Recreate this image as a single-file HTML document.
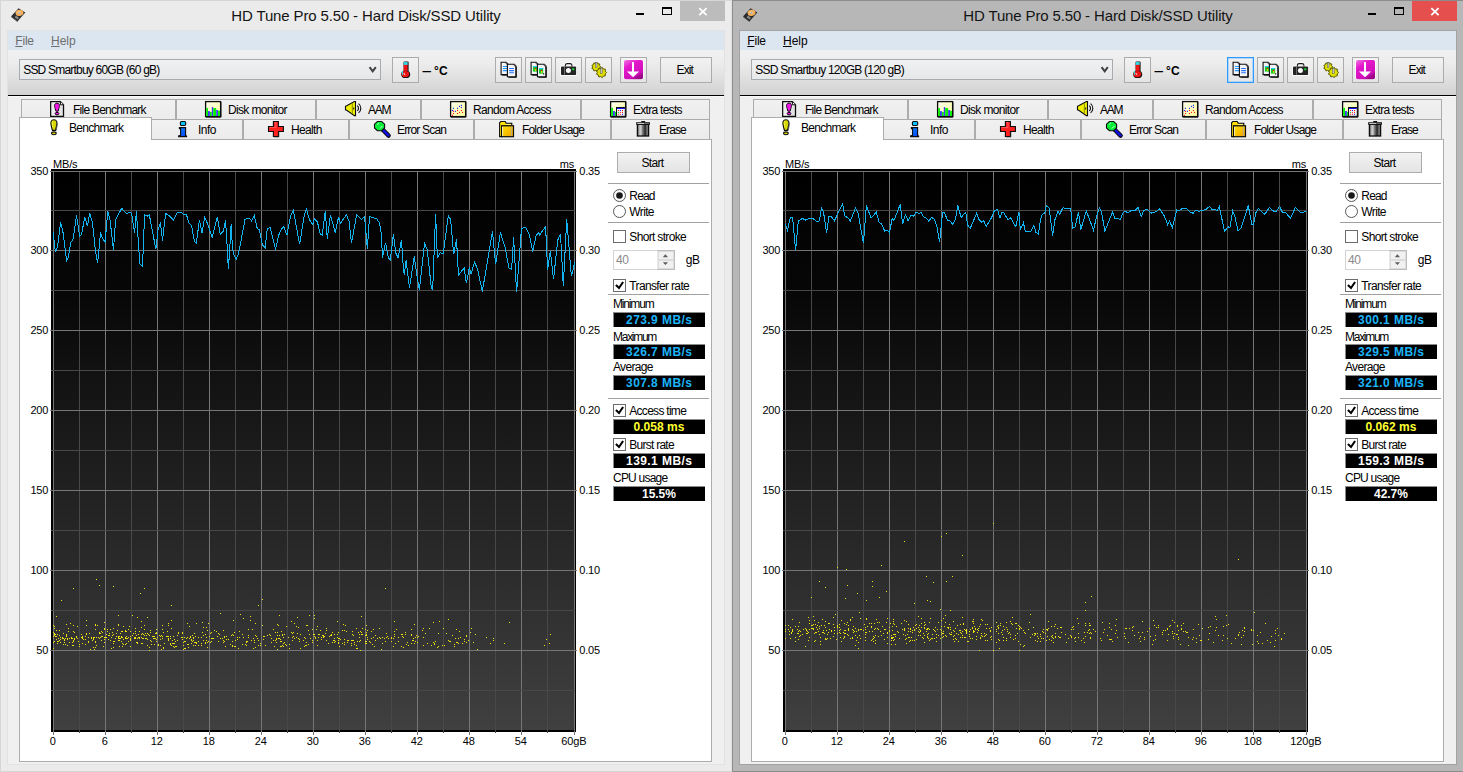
<!DOCTYPE html>
<html><head><meta charset="utf-8"><title>HD Tune Pro 5.50 - Hard Disk/SSD Utility</title>
<style>
html,body{margin:0;padding:0;}
body{width:1463px;height:772px;overflow:hidden;position:relative;background:#ebebeb;font-family:"Liberation Sans", Arial, sans-serif;}
div{box-sizing:content-box;}
u{text-decoration:underline;text-underline-offset:1px;}
</style></head><body>
<div style="position:absolute;left:0px;top:0;width:732px;height:772px;background:#ebebeb;overflow:hidden;">
<div style="position:absolute;left:0px;top:0px;width:732px;height:1px;background:#d6d6d6;"></div>
<div style="position:absolute;left:0px;top:0px;width:1px;height:772px;background:#d6d6d6;"></div>
<div style="position:absolute;left:731px;top:0px;width:1px;height:772px;background:#e2e2e2;"></div>
<svg style="position:absolute;left:11px;top:8px" width="15" height="14" viewBox="0 0 15 14"><path d="M7.6 0.2L14.3 4.5L6.6 13.3L0.2 8.2Z" fill="#2a2a2c"/><path d="M0.2 8.2L6.6 13.3L6.6 14L0.2 9z" fill="#151515"/><ellipse cx="8.5" cy="4.9" rx="4" ry="3.1" transform="rotate(-12 8.5 4.9)" fill="#f3ad58"/><ellipse cx="8.1" cy="4.3" rx="2.2" ry="1.5" fill="#f8c884" opacity=".7"/><ellipse cx="8.4" cy="4.9" rx="1.1" ry=".9" fill="#9fb4cc"/><path d="M4.3 8.4L7.3 10.6" stroke="#8a8a8a" stroke-width="2.2"/></svg>
<div style="position:absolute;top:6px;font-size:15px;line-height:19px;height:19px;color:#141414;white-space:nowrap;letter-spacing:-0.142px;left:266.13px;width:200px;text-align:center;left:66px;width:600px;">HD Tune Pro 5.50 - Hard Disk/SSD Utility</div>
<div style="position:absolute;left:636px;top:13px;width:8px;height:2px;background:#000;"></div>
<div style="position:absolute;left:662px;top:7px;width:8px;height:5px;border:1px solid #000;border-top-width:2px;"></div>
<div style="position:absolute;left:680px;top:1px;width:45px;height:20px;background:#bcbcbc;"></div>
<svg style="position:absolute;left:698px;top:7px" width="10" height="9" viewBox="0 0 10 9"><path d="M1.3 1.1L8.6 8.1M8.6 1.1L1.3 8.1" stroke="#fff" stroke-width="1.8"/></svg>
<div style="position:absolute;left:7px;top:30px;width:718px;height:735px;background:#e2e2e2;"></div>
<div style="position:absolute;left:0px;top:771px;width:732px;height:1px;background:#d6d6d6;"></div>
<div style="position:absolute;left:8px;top:31px;width:716px;height:733px;background:#f0f0f0;"></div>
<div style="position:absolute;left:8px;top:31px;width:716px;height:19px;background:#dce6f1;"></div>
<div style="position:absolute;top:33px;font-size:12px;line-height:16px;height:16px;color:#6d6d6d;white-space:nowrap;letter-spacing:-0.209px;left:15.3px;"><u>F</u>ile</div>
<div style="position:absolute;top:33px;font-size:12px;line-height:16px;height:16px;color:#6d6d6d;white-space:nowrap;letter-spacing:0.005px;left:51px;"><u>H</u>elp</div>
<div style="position:absolute;left:8px;top:50px;width:716px;height:45px;background:linear-gradient(#f1f1f1,#ececec 30%,#d2d2d2);"></div>
<div style="position:absolute;left:8px;top:95px;width:716px;height:1px;background:#000;"></div>
<div style="position:absolute;left:8px;top:96px;width:716px;height:1px;background:#fafafa;"></div>
<div style="position:absolute;left:19px;top:59px;width:360px;height:19px;border:1px solid #a7abb0;background:linear-gradient(#f0f1f3,#e5e7e9);"></div>
<div style="position:absolute;top:62px;font-size:12px;line-height:16px;height:16px;color:#000;white-space:nowrap;letter-spacing:-0.791px;left:23.2px;">SSD Smartbuy 60GB (60 gB)</div>
<svg style="position:absolute;left:368px;top:66px" width="10" height="8" viewBox="0 0 10 8"><path d="M1.6 1.2L4.7 5.4L7.8 1.2" stroke="#404040" stroke-width="2" fill="none"/></svg>
<div style="position:absolute;left:392px;top:57px;width:25px;height:24px;border:1px solid #acacac;background:linear-gradient(#f2f2f2,#e4e4e4);"></div>
<svg style="position:absolute;left:397px;top:61px;overflow:visible" width="18" height="18" viewBox="0 0 18 18"><rect x="6.6" y="0.4" width="5" height="12" rx="1" fill="#101010"/><rect x="6.7" y="0.9" width="3.9" height="11.5" fill="#f01414"/><rect x="6.7" y="0.9" width="3.9" height="3" fill="#28d8e0"/><ellipse cx="8.7" cy="13.4" rx="4.5" ry="3.6" fill="#101010"/><ellipse cx="8.3" cy="13.1" rx="3.9" ry="3.1" fill="#f01414"/><path d="M4.5 11.6L5.6 10.2V14" stroke="#28d8e0" stroke-width="1" fill="none"/><path d="M7 12.2C7 13 7.4 13.6 8.2 13.8" stroke="#fff" stroke-width="1" fill="none"/></svg>
<div style="position:absolute;top:63px;font-size:12px;line-height:16px;height:16px;color:#000;white-space:nowrap;font-weight:bold;left:421.6px;"><span style="display:inline-block;transform:scaleX(1.42);transform-origin:0 50%;">–</span><span style="display:inline-block;width:5.8px"> </span><span style="letter-spacing:0.1px">°C</span></div>
<div style="position:absolute;left:495px;top:57px;width:25px;height:24px;border:1px solid #acacac;background:linear-gradient(#f2f2f2,#e4e4e4);"></div>
<svg style="position:absolute;left:500px;top:61px;overflow:visible" width="18" height="18" viewBox="0 0 18 18"><path d="M1.1 1.2H6.1L7.699999999999999 2.8V13.6H1.1Z" fill="#f4f4f6" stroke="#101010" stroke-width="1.1"/><path d="M6.1 1.2V2.8H7.699999999999999" fill="#fff" stroke="#101010" stroke-width=".7"/><path d="M8.299999999999999 3.4000000000000004V14.2H2.1" stroke="#101010" stroke-width=".9" fill="none"/><path d="M2.9 5.5H7.6M2.9 7.5H7.6M2.9 9.6H7.6" stroke="#1e96ff" stroke-width="1.1"/><path d="M7.4 3.2H14.200000000000001L15.8 4.800000000000001V15.8H7.4Z" fill="#f4f4f6" stroke="#101010" stroke-width="1.1"/><path d="M14.200000000000001 3.2V4.800000000000001H15.8" fill="#fff" stroke="#101010" stroke-width=".7"/><path d="M16.400000000000002 5.4V16.400000000000002H8.4" stroke="#101010" stroke-width=".9" fill="none"/><path d="M9.2 7.5H13.9M9.2 9.6H13.9M9.2 11.7H13.9" stroke="#2070ff" stroke-width="1.1"/></svg>
<div style="position:absolute;left:525px;top:57px;width:25px;height:24px;border:1px solid #acacac;background:linear-gradient(#f2f2f2,#e4e4e4);"></div>
<svg style="position:absolute;left:530px;top:61px;overflow:visible" width="18" height="18" viewBox="0 0 18 18"><path d="M1.1 1.2H6.1L7.699999999999999 2.8V13.6H1.1Z" fill="#f4f4f6" stroke="#101010" stroke-width="1.1"/><path d="M6.1 1.2V2.8H7.699999999999999" fill="#fff" stroke="#101010" stroke-width=".7"/><path d="M8.299999999999999 3.4000000000000004V14.2H2.1" stroke="#101010" stroke-width=".9" fill="none"/><rect x="2.9" y="5" width="4.2" height="5.6" fill="#10d020"/><rect x="2.9" y="5" width="4.2" height="1.2" fill="#20c8f0"/><rect x="4.9" y="7.8" width="1.4" height="2" fill="#e8e000"/><rect x="4.7" y="6.8" width="1.3" height="1.3" fill="#f01010"/><path d="M7.4 3.2H14.200000000000001L15.8 4.800000000000001V15.8H7.4Z" fill="#f4f4f6" stroke="#101010" stroke-width="1.1"/><path d="M14.200000000000001 3.2V4.800000000000001H15.8" fill="#fff" stroke="#101010" stroke-width=".7"/><path d="M16.400000000000002 5.4V16.400000000000002H8.4" stroke="#101010" stroke-width=".9" fill="none"/><rect x="9" y="7" width="4.2" height="5.6" fill="#10d020"/><rect x="9" y="7" width="4.2" height="1.2" fill="#20c8f0"/><rect x="11" y="9.8" width="1.4" height="2" fill="#e8e000"/><rect x="10.8" y="8.8" width="1.3" height="1.3" fill="#f01010"/><rect x="13" y="12.3" width="1.2" height="1.2" fill="#101010"/></svg>
<div style="position:absolute;left:555px;top:57px;width:25px;height:24px;border:1px solid #acacac;background:linear-gradient(#f2f2f2,#e4e4e4);"></div>
<svg style="position:absolute;left:560px;top:61px;overflow:visible" width="18" height="18" viewBox="0 0 18 18"><path d="M0.3 5.8C0.3 4.8 1 4.6 2 4.6H4.2L5.2 1.3H12.2L13.2 4.6H15C16.2 4.6 16.8 5 16.8 6V14.8H0.3Z" fill="#fff"/><path d="M5.4 5.6V4C5.4 2.9 6.2 2.6 7.2 2.6H10C11 2.6 11.9 2.9 11.9 4V5.6" fill="#f4f4f4" stroke="#161616" stroke-width="1.1"/><rect x="1" y="5.5" width="15.1" height="8.5" rx=".8" fill="#242424"/><path d="M4.5 5.8V13.8" stroke="#7a7a7a" stroke-width=".8"/><circle cx="8.4" cy="9.5" r="2.5" fill="#fafafa"/><rect x="12.2" y="7.3" width="2.1" height="1.9" fill="#10e030"/></svg>
<div style="position:absolute;left:585px;top:57px;width:25px;height:24px;border:1px solid #acacac;background:linear-gradient(#f2f2f2,#e4e4e4);"></div>
<svg style="position:absolute;left:590px;top:61px;overflow:visible" width="18" height="18" viewBox="0 0 18 18"><polygon points="10.80,5.90 9.57,7.13 9.72,8.86 7.99,9.01 7.00,10.43 5.58,9.43 3.90,9.88 3.45,8.21 1.88,7.47 2.61,5.90 1.88,4.33 3.45,3.59 3.90,1.92 5.58,2.37 7.00,1.37 7.99,2.79 9.72,2.94 9.57,4.67" fill="#e0e000" stroke="#5a5a00" stroke-width="1" stroke-linejoin="round"/><rect x="5.5" y="1.4" width="1.5" height="5.2" fill="#c8c8d4" stroke="#55555f" stroke-width=".5"/><polygon points="16.60,11.50 15.21,12.89 15.38,14.84 13.43,15.01 12.30,16.62 10.70,15.49 8.80,16.00 8.29,14.11 6.51,13.28 7.34,11.50 6.51,9.72 8.29,8.89 8.80,7.00 10.70,7.51 12.30,6.38 13.43,7.99 15.38,8.16 15.21,10.11" fill="#e0e000" stroke="#5a5a00" stroke-width="1" stroke-linejoin="round"/><rect x="10.7" y="7.2" width="1.5" height="5.2" fill="#c8c8d4" stroke="#55555f" stroke-width=".5"/></svg>
<div style="position:absolute;left:620px;top:57px;width:25px;height:24px;border:1px solid #acacac;background:linear-gradient(#f2f2f2,#e4e4e4);"></div>
<svg style="position:absolute;left:624px;top:60px;overflow:visible" width="19" height="19" viewBox="0 0 19 19"><defs><linearGradient id="mg" x1="0" y1="0" x2="0.6" y2="1"><stop offset="0" stop-color="#f478e4"/><stop offset=".35" stop-color="#e418cc"/><stop offset=".85" stop-color="#d010b8"/><stop offset="1" stop-color="#9c0888"/></linearGradient></defs><rect x="-0.7" y="-0.7" width="20.4" height="20.4" rx="2.4" fill="#fff" opacity=".85"/><rect x="0" y="0" width="19" height="19.2" rx="1.8" fill="url(#mg)"/><rect x="8" y="2.1" width="2" height="10" fill="#fff"/><path d="M2.9 11.4H15.1L9 17.2Z" fill="#fff"/></svg>
<div style="position:absolute;left:660px;top:57px;width:50px;height:24px;border:1px solid #acacac;background:linear-gradient(#f2f2f2,#e4e4e4);"></div>
<div style="position:absolute;top:62px;font-size:12px;line-height:16px;height:16px;color:#000;white-space:nowrap;letter-spacing:-0.926px;left:584.74px;width:200px;text-align:center;">Exit</div>
<div style="position:absolute;left:21px;top:99px;width:153px;height:20px;border:1px solid #acacac;background:linear-gradient(#f1f1f1,#ebebeb);border-bottom:none;"></div>
<div style="position:absolute;left:176px;top:99px;width:138px;height:20px;border:1px solid #acacac;background:linear-gradient(#f1f1f1,#ebebeb);border-bottom:none;"></div>
<div style="position:absolute;left:316px;top:99px;width:103px;height:20px;border:1px solid #acacac;background:linear-gradient(#f1f1f1,#ebebeb);border-bottom:none;"></div>
<div style="position:absolute;left:421px;top:99px;width:158px;height:20px;border:1px solid #acacac;background:linear-gradient(#f1f1f1,#ebebeb);border-bottom:none;"></div>
<div style="position:absolute;left:581px;top:99px;width:127px;height:20px;border:1px solid #acacac;background:linear-gradient(#f1f1f1,#ebebeb);border-bottom:none;"></div>
<div style="position:absolute;left:152px;top:119px;width:90px;height:20px;border:1px solid #acacac;background:linear-gradient(#f1f1f1,#ebebeb);border-bottom:none;border-left:none;"></div>
<div style="position:absolute;left:243px;top:119px;width:104px;height:20px;border:1px solid #acacac;background:linear-gradient(#f1f1f1,#ebebeb);border-bottom:none;"></div>
<div style="position:absolute;left:349px;top:119px;width:123px;height:20px;border:1px solid #acacac;background:linear-gradient(#f1f1f1,#ebebeb);border-bottom:none;"></div>
<div style="position:absolute;left:474px;top:119px;width:135px;height:20px;border:1px solid #acacac;background:linear-gradient(#f1f1f1,#ebebeb);border-bottom:none;"></div>
<div style="position:absolute;left:611px;top:119px;width:97px;height:20px;border:1px solid #acacac;background:linear-gradient(#f1f1f1,#ebebeb);border-bottom:none;"></div>
<div style="position:absolute;left:19px;top:139px;width:691px;height:621px;background:#fff;border:1px solid #acacac;"></div>
<div style="position:absolute;left:19px;top:117px;width:131px;height:22px;background:#fff;border:1px solid #acacac;border-bottom:none;"></div>
<svg style="position:absolute;left:50px;top:101px;overflow:visible" width="15" height="17" viewBox="0 0 15 17"><path d="M0.7 0.7H10.4L13.5 3.8V15.4H0.7Z" fill="#e4e4e6" stroke="#0c0c0c" stroke-width="1.3"/><path d="M1.6 1.6H6V14.5H1.6Z" fill="#f4f4f4" opacity=".7"/><path d="M10.4 0.7V3.8H13.5" fill="#fff" stroke="#0c0c0c" stroke-width="1"/><path d="M7 2.2C9.7 2.2 10 4.8 8.8 7.6L8.1 10.2H5.9L5.2 7.6C4 4.8 4.3 2.2 7 2.2Z" fill="#f018e4" stroke="#1a001a" stroke-width="1"/><ellipse cx="7" cy="12.6" rx="1.9" ry="1.2" fill="#f018e4" stroke="#1a001a" stroke-width="1"/></svg>
<div style="position:absolute;top:102px;font-size:12px;line-height:16px;height:16px;color:#000;white-space:nowrap;letter-spacing:-0.755px;left:73px;">File Benchmark</div>
<svg style="position:absolute;left:205px;top:101px;overflow:visible" width="17" height="17" viewBox="0 0 17 17"><defs><linearGradient id="cr" x1="0" y1="0" x2="1" y2="1"><stop offset="0" stop-color="#fffff0"/><stop offset="1" stop-color="#ffff98"/></linearGradient></defs><rect x="0.6" y="0.6" width="15" height="15" fill="url(#cr)" stroke="#0c0c0c" stroke-width="1.3"/><path d="M15.9 1V16.1H1" stroke="#0c0c0c" stroke-width="1" fill="none"/><rect x="1.2" y="7.1" width="1.8" height="7.9" fill="#00f000"/><rect x="3" y="10.1" width="1.9" height="4.9" fill="#4038ff"/><rect x="4.9" y="10.9" width="1.9" height="4.1" fill="#00f000"/><rect x="6.8" y="6" width="1.4" height="9.0" fill="#4038ff"/><rect x="8.2" y="7.1" width="3.0" height="7.9" fill="#00f000"/><rect x="11.2" y="9" width="1.9" height="6.0" fill="#4038ff"/><rect x="13.1" y="9.8" width="1.9" height="5.2" fill="#00f000"/></svg>
<div style="position:absolute;top:102px;font-size:12px;line-height:16px;height:16px;color:#000;white-space:nowrap;letter-spacing:-0.657px;left:228px;">Disk monitor</div>
<svg style="position:absolute;left:345px;top:101px;overflow:visible" width="17" height="16" viewBox="0 0 17 16"><path d="M0.5 5.3L1.7 4.8L9.4 0.5H10.5V14.6H9.4L1.7 9.3L0.5 8.8Z" fill="#f0f000" stroke="#0c0c0c" stroke-width="1.1"/><path d="M7.3 2.2V12.8" stroke="#8a8a00" stroke-width="1"/><path d="M8.6 6.4v2.2" stroke="#333" stroke-width="1.2"/><path d="M12.3 4.6C13.9 5.9 13.9 8.6 12.3 9.9" stroke="#0c0c0c" stroke-width="1.1" fill="none"/><path d="M13.6 2.6C16.6 5 16.6 9.4 13.6 11.8" stroke="#0c0c0c" stroke-width="1.1" fill="none"/></svg>
<div style="position:absolute;top:102px;font-size:12px;line-height:16px;height:16px;color:#000;white-space:nowrap;letter-spacing:-1.235px;left:368px;">AAM</div>
<svg style="position:absolute;left:450px;top:101px;overflow:visible" width="17" height="17" viewBox="0 0 17 17"><rect x="0.6" y="0.6" width="15" height="15" fill="url(#cr2)" stroke="#0c0c0c" stroke-width="1.3"/><defs><linearGradient id="cr2" x1="0" y1="0" x2="1" y2="1"><stop offset="0" stop-color="#fffff0"/><stop offset="1" stop-color="#ffff98"/></linearGradient></defs><path d="M15.9 1V16.1H1" stroke="#0c0c0c" stroke-width="1" fill="none"/><rect x="2.95" y="6.75" width="1.1" height="1.1" fill="#1010ff"/><rect x="1.85" y="8.95" width="1.1" height="1.1" fill="#1010ff"/><rect x="4.85" y="9.75" width="1.1" height="1.1" fill="#1010ff"/><rect x="6.95" y="6.75" width="1.1" height="1.1" fill="#1010ff"/><rect x="8.95" y="4.85" width="1.1" height="1.1" fill="#1010ff"/><rect x="10.85" y="3.85" width="1.1" height="1.1" fill="#1010ff"/><rect x="10.85" y="5.95" width="1.1" height="1.1" fill="#1010ff"/><rect x="2.95" y="9.75" width="1.1" height="1.1" fill="#ff1010"/><rect x="2.95" y="11.95" width="1.1" height="1.1" fill="#ff1010"/><rect x="1.85" y="13.85" width="1.1" height="1.1" fill="#ff1010"/><rect x="6.95" y="8.95" width="1.1" height="1.1" fill="#ff1010"/><rect x="6.95" y="11.95" width="1.1" height="1.1" fill="#ff1010"/><rect x="8.95" y="10.85" width="1.1" height="1.1" fill="#ff1010"/><rect x="10.85" y="8.95" width="1.1" height="1.1" fill="#ff1010"/><rect x="11.95" y="10.85" width="1.1" height="1.1" fill="#ff1010"/></svg>
<div style="position:absolute;top:102px;font-size:12px;line-height:16px;height:16px;color:#000;white-space:nowrap;letter-spacing:-0.685px;left:473px;">Random Access</div>
<svg style="position:absolute;left:610px;top:101px;overflow:visible" width="17" height="17" viewBox="0 0 17 17"><defs><linearGradient id="cr3" x1="0" y1="0" x2="1" y2="1"><stop offset="0" stop-color="#fffff0"/><stop offset="1" stop-color="#ffff98"/></linearGradient></defs><rect x="0.6" y="0.6" width="15" height="15" fill="url(#cr3)" stroke="#0c0c0c" stroke-width="1.3"/><path d="M15.9 1V16.1H1" stroke="#0c0c0c" stroke-width="1" fill="none"/><rect x="1.2" y="6.8" width="1.8" height="8.2" fill="#00f000"/><rect x="3" y="10" width="1.9" height="5" fill="#4038ff"/><rect x="4.9" y="10.9" width="1.4" height="4.1" fill="#00f000"/><rect x="6.5" y="6.5" width="8.8" height="8.8" fill="#f4f4f4" stroke="#0c0c0c" stroke-width="1"/><rect x="7" y="6.9" width="7.8" height="1.1" fill="#1010ff"/><rect x="7.90" y="9.00" width="1" height="1" fill="#ff1010"/><rect x="9.90" y="9.00" width="1" height="1" fill="#1010ff"/><rect x="12.00" y="9.00" width="1" height="1" fill="#ff1010"/><rect x="7.90" y="10.90" width="1" height="1" fill="#00c000"/><rect x="9.90" y="10.90" width="1" height="1" fill="#ff1010"/><rect x="12.00" y="10.90" width="1" height="1" fill="#ff1010"/><rect x="7.90" y="12.80" width="1" height="1" fill="#ff1010"/><rect x="9.90" y="12.80" width="1" height="1" fill="#ff1010"/><rect x="12.00" y="12.80" width="1" height="1" fill="#1010ff"/></svg>
<div style="position:absolute;top:102px;font-size:12px;line-height:16px;height:16px;color:#000;white-space:nowrap;letter-spacing:-0.717px;left:633px;">Extra tests</div>
<svg style="position:absolute;left:178px;top:121px;overflow:visible" width="10" height="17" viewBox="0 0 10 17"><defs><linearGradient id="ib" x1="0" y1="0" x2="1" y2="1"><stop offset="0" stop-color="#0a90ff"/><stop offset="1" stop-color="#0838f0"/></linearGradient></defs><rect x="2.4" y="0.5" width="5.3" height="4" rx="1.2" fill="#08c4fa" stroke="#0c0c0c" stroke-width="1.1"/><path d="M1.4 6.6H7.6V14.5L8.6 15V15.6H0.6V15L2.6 14.4V7.8H1.4Z" fill="url(#ib)" stroke="#0c0c0c" stroke-width="1.1"/></svg>
<div style="position:absolute;top:122px;font-size:12px;line-height:16px;height:16px;color:#000;white-space:nowrap;letter-spacing:-0.554px;left:198px;">Info</div>
<svg style="position:absolute;left:268px;top:121px;overflow:visible" width="17" height="17" viewBox="0 0 17 17"><path d="M5.4 0.5H10.4V5.5H15.4V10.5H10.4V15.5H5.4V10.5H0.5V5.5H5.4Z" fill="#ff2020" stroke="#0c0c0c" stroke-width="1.1"/><path d="M6.3 1.5H8V6.4H1.5" stroke="#ff7070" stroke-width=".9" fill="none" opacity=".8"/><path d="M11 10.9V16.1H6" stroke="#333" stroke-width=".8" fill="none" opacity=".6"/></svg>
<div style="position:absolute;top:122px;font-size:12px;line-height:16px;height:16px;color:#000;white-space:nowrap;letter-spacing:-0.648px;left:291px;">Health</div>
<svg style="position:absolute;left:374px;top:121px;overflow:visible" width="17" height="17" viewBox="0 0 17 17"><path d="M8.3 8.2L14.6 14.6" stroke="#0c0c0c" stroke-width="4.4" stroke-linecap="round"/><path d="M8.3 8.2L14.4 14.4" stroke="#1010e0" stroke-width="2.6" stroke-linecap="round"/><path d="M3.4 0.5H7.7L10.6 3.2V6.9L7.7 9.7H3.4L0.5 6.9V3.2Z" fill="#08ee38" stroke="#0c0c0c" stroke-width="1.1"/><path d="M3.2 3.6L4.8 2M6 7.4L8.3 5" stroke="#d8ffe0" stroke-width=".9"/></svg>
<div style="position:absolute;top:122px;font-size:12px;line-height:16px;height:16px;color:#000;white-space:nowrap;letter-spacing:-0.825px;left:397px;">Error Scan</div>
<svg style="position:absolute;left:499px;top:121px;overflow:visible" width="16" height="17" viewBox="0 0 16 17"><defs><linearGradient id="fg" x1="0" y1="0" x2="1" y2="1"><stop offset="0" stop-color="#ffe400"/><stop offset="1" stop-color="#f0a000"/></linearGradient></defs><path d="M0.6 15.6V1.8L1.8 0.5H6.2L7.3 2.4H12.8V5H2.6V15.6Z" fill="#ffe000" stroke="#0c0c0c" stroke-width="1.1"/><path d="M7 3.3h5" stroke="#fff8b0" stroke-width=".9"/><rect x="2.6" y="4.8" width="11.9" height="10.9" fill="url(#fg)" stroke="#0c0c0c" stroke-width="1.2"/><path d="M3.6 5.8V14.8" stroke="#fffad0" stroke-width=".9"/><path d="M12.4 5.5V15" stroke="#a8a8a8" stroke-width=".8"/></svg>
<div style="position:absolute;top:122px;font-size:12px;line-height:16px;height:16px;color:#000;white-space:nowrap;letter-spacing:-0.82px;left:522px;">Folder Usage</div>
<svg style="position:absolute;left:636px;top:121px;overflow:visible" width="15" height="17" viewBox="0 0 15 17"><defs><linearGradient id="tg" x1="0" y1="0" x2="1" y2="0"><stop offset="0" stop-color="#444"/><stop offset=".27" stop-color="#f8f8f8"/><stop offset=".42" stop-color="#8a8a8a"/><stop offset=".7" stop-color="#2a2a2a"/><stop offset=".88" stop-color="#888"/><stop offset="1" stop-color="#333"/></linearGradient></defs><rect x="1.4" y="3.2" width="11.2" height="11.8" fill="url(#tg)" stroke="#0c0c0c" stroke-width="1.3"/><path d="M4.3 4V14.5M9 4V14.5" stroke="#222" stroke-width=".5" opacity=".5"/><rect x="0.2" y="1.2" width="13.7" height="2.5" fill="#0c0c0c"/><rect x="5.3" y="0" width="3.8" height="1.6" fill="#0c0c0c"/><path d="M1.2 2.4H8" stroke="#ddd" stroke-width="1"/><path d="M8 2.4H13" stroke="#777" stroke-width="1"/></svg>
<div style="position:absolute;top:122px;font-size:12px;line-height:16px;height:16px;color:#000;white-space:nowrap;letter-spacing:-0.91px;left:659px;">Erase</div>
<svg style="position:absolute;left:50px;top:119px;overflow:visible" width="10" height="17" viewBox="0 0 10 17"><path d="M3.9 0.8C6.8 0.8 7.4 3 6.6 6.5L5.5 11.4H2.4L1.2 6.5C0.4 3 1 0.8 3.9 0.8Z" fill="#d6d600" stroke="#0c0c0c" stroke-width="1.1"/><path d="M2.6 2.2C2 3.5 2.2 5.5 3 8.5" stroke="#f4f450" stroke-width="1" fill="none"/><path d="M6.9 3.5C7.6 5 6.9 8 6.2 11.6" stroke="#555" stroke-width=".9" fill="none"/><ellipse cx="3.9" cy="14.3" rx="2.3" ry="1.4" fill="#d6d600" stroke="#0c0c0c" stroke-width="1.1"/></svg>
<div style="position:absolute;top:120px;font-size:12px;line-height:16px;height:16px;color:#000;white-space:nowrap;letter-spacing:-0.71px;left:69px;">Benchmark</div>
<svg style="position:absolute;left:0;top:0" width="732" height="772" viewBox="0 0 732 772">
<defs><linearGradient id="cg" x1="0" y1="0" x2="0" y2="1"><stop offset="0" stop-color="#000"/><stop offset="0.2" stop-color="#060606"/><stop offset="1" stop-color="#404040"/></linearGradient></defs>
<rect x="51" y="169" width="525" height="563" fill="#000"/>
<rect x="53" y="171" width="522" height="559" fill="url(#cg)"/>
<rect x="53" y="171" width="1" height="564" fill="#767676"/><rect x="79" y="171" width="1" height="562" fill="#484848"/><rect x="105" y="171" width="1" height="564" fill="#767676"/><rect x="131" y="171" width="1" height="562" fill="#484848"/><rect x="157" y="171" width="1" height="564" fill="#767676"/><rect x="183" y="171" width="1" height="562" fill="#484848"/><rect x="209" y="171" width="1" height="564" fill="#767676"/><rect x="235" y="171" width="1" height="562" fill="#484848"/><rect x="261" y="171" width="1" height="564" fill="#767676"/><rect x="287" y="171" width="1" height="562" fill="#484848"/><rect x="313" y="171" width="1" height="564" fill="#767676"/><rect x="339" y="171" width="1" height="562" fill="#484848"/><rect x="365" y="171" width="1" height="564" fill="#767676"/><rect x="391" y="171" width="1" height="562" fill="#484848"/><rect x="417" y="171" width="1" height="564" fill="#767676"/><rect x="443" y="171" width="1" height="562" fill="#484848"/><rect x="469" y="171" width="1" height="564" fill="#767676"/><rect x="495" y="171" width="1" height="562" fill="#484848"/><rect x="521" y="171" width="1" height="564" fill="#767676"/><rect x="547" y="171" width="1" height="562" fill="#484848"/><rect x="574" y="171" width="1" height="564" fill="#767676"/><rect x="50" y="171" width="527" height="1" fill="#767676"/><rect x="51" y="210" width="524" height="1" fill="#484848"/><rect x="50" y="250" width="527" height="1" fill="#767676"/><rect x="51" y="290" width="524" height="1" fill="#484848"/><rect x="50" y="330" width="527" height="1" fill="#767676"/><rect x="51" y="370" width="524" height="1" fill="#484848"/><rect x="50" y="410" width="527" height="1" fill="#767676"/><rect x="51" y="450" width="524" height="1" fill="#484848"/><rect x="50" y="490" width="527" height="1" fill="#767676"/><rect x="51" y="530" width="524" height="1" fill="#484848"/><rect x="50" y="570" width="527" height="1" fill="#767676"/><rect x="51" y="610" width="524" height="1" fill="#484848"/><rect x="50" y="650" width="527" height="1" fill="#767676"/><rect x="51" y="690" width="524" height="1" fill="#484848"/>
<path d="M160 636h1M237 639h1M72 645h1M76 636h1M194 642h1M276 642h1M254 642h1M377 638h1M100 633h1M113 647h1M280 639h1M72 638h1M298 638h1M203 627h1M347 640h1M232 646h1M319 634h1M191 640h1M103 646h1M334 642h1M388 638h1M255 635h1M366 634h1M73 641h1M284 642h1M181 637h1M60 642h1M72 642h1M95 624h1M79 646h1M242 644h1M145 633h1M172 643h1M111 637h1M130 638h1M54 635h1M175 646h1M228 639h1M296 626h1M387 636h1M183 645h1M73 631h1M122 637h1M53 636h1M86 620h1M270 635h1M136 635h1M370 642h1M207 642h1M166 636h1M361 616h1M233 635h1M240 614h1M380 638h1M139 631h1M235 646h1M162 629h1M373 629h1M357 641h1M171 628h1M62 638h1M454 646h1M434 644h1M126 636h1M118 625h1M366 634h1M286 645h1M411 643h1M328 643h1M163 647h1M470 632h1M317 626h1M95 625h1M101 636h1M486 637h1M96 579h1M285 644h1M431 645h1M123 626h1M150 632h1M192 635h1M411 635h1M407 642h1M416 635h1M59 640h1M113 586h1M110 640h1M161 635h1M245 644h1M135 631h1M337 634h1M413 638h1M269 634h1M203 640h1M212 638h1M439 621h1M247 641h1M93 639h1M77 626h1M342 643h1M104 639h1M393 638h1M125 637h1M504 643h1M106 637h1M118 638h1M316 629h1M59 635h1M274 646h1M471 628h1M141 637h1M96 637h1M412 640h1M417 642h1M307 625h1M194 633h1M435 641h1M375 635h1M379 637h1M423 628h1M95 641h1M106 634h1M120 633h1M149 647h1M112 632h1M58 641h1M243 618h1M88 642h1M196 642h1M224 637h1M490 643h1M279 635h1M168 636h1M324 636h1M107 629h1M294 623h1M133 633h1M201 637h1M460 637h1M464 639h1M171 605h1M210 642h1M54 628h1M82 637h1M154 638h1M258 640h1M313 634h1M182 633h1M317 640h1M67 645h1M321 637h1M99 633h1M351 640h1M257 638h1M129 626h1M97 625h1M246 645h1M275 640h1M348 640h1M223 640h1M322 635h1M77 638h1M323 637h1M219 634h1M335 641h1M282 634h1M325 633h1M250 620h1M142 638h1M149 635h1M207 647h1M119 646h1M433 622h1M466 642h1M142 633h1M256 636h1M232 645h1M225 646h1M308 630h1M61 600h1M202 632h1M99 632h1M53 648h1M366 625h1M405 632h1M176 646h1M172 640h1M144 625h1M147 645h1M135 633h1M177 640h1M394 634h1M438 633h1M315 637h1M329 636h1M148 634h1M209 636h1M151 644h1M288 637h1M246 642h1M122 643h1M220 613h1M202 622h1M116 636h1M132 635h1M251 640h1M190 636h1M178 632h1M466 635h1M223 642h1M143 634h1M185 648h1M386 633h1M63 644h1M258 605h1M423 637h1M375 640h1M104 642h1M299 639h1M334 634h1M243 637h1M417 637h1M153 638h1M306 625h1M76 637h1M127 638h1M56 616h1M283 643h1M211 638h1M309 615h1M60 639h1M138 637h1M422 630h1M192 641h1M118 640h1M121 636h1M156 641h1M332 632h1M450 641h1M191 643h1M446 633h1M475 634h1M70 623h1M393 646h1M546 639h1M433 642h1M63 638h1M163 632h1M53 625h1M94 649h1M121 631h1M196 623h1M210 633h1M174 639h1M63 633h1M66 624h1M73 640h1M403 647h1M143 638h1M314 634h1M144 588h1M415 641h1M130 640h1M455 638h1M195 642h1M425 633h1M359 634h1M267 635h1M342 630h1M118 640h1M64 642h1M161 649h1M141 621h1M85 639h1M130 636h1M273 640h1M291 621h1M367 630h1M323 635h1M135 628h1M255 623h1M184 637h1M353 640h1M509 622h1M366 641h1M66 634h1M473 642h1M427 643h1M139 637h1M443 628h1M125 631h1M99 638h1M286 626h1M56 636h1M156 633h1M347 642h1M184 641h1M281 631h1M189 626h1M155 638h1M171 645h1M380 638h1M318 634h1M54 634h1M188 644h1M206 627h1M281 641h1M82 637h1M101 631h1M230 644h1M351 643h1M118 615h1M214 630h1M423 645h1M360 631h1M343 624h1M362 628h1M125 630h1M93 637h1M317 645h1M331 635h1M365 629h1M275 632h1M192 635h1M201 643h1M60 637h1M334 640h1M205 634h1M95 641h1M83 639h1M279 638h1M321 639h1M223 640h1M448 619h1M320 630h1M117 630h1M415 637h1M344 644h1M330 635h1M402 636h1M222 638h1M122 631h1M65 638h1M106 637h1M109 633h1M91 638h1M386 637h1M255 647h1M184 648h1M141 637h1M334 638h1M111 648h1M137 643h1M493 638h1M53 632h1M102 636h1M401 634h1M128 641h1M170 638h1M171 628h1M120 638h1M211 632h1M102 636h1M280 641h1M140 593h1M248 629h1M283 646h1M135 638h1M67 638h1M72 642h1M57 643h1M119 640h1M224 641h1M155 633h1M69 642h1M55 634h1M326 640h1M128 629h1M130 631h1M304 646h1M312 629h1M344 639h1M141 643h1M391 637h1M139 638h1M326 630h1M391 641h1M277 649h1M292 633h1M306 642h1M198 637h1M123 639h1M78 641h1M88 641h1M167 636h1M303 640h1M305 645h1M173 643h1M357 648h1M414 643h1M88 637h1M369 641h1M278 638h1M86 633h1M331 634h1M59 630h1M146 638h1M462 643h1M372 644h1M198 641h1M168 638h1M379 637h1M358 632h1M333 640h1M54 633h1M114 641h1M168 640h1M147 617h1M306 645h1M79 644h1M305 638h1M186 638h1M398 637h1M121 637h1M405 634h1M130 646h1M235 640h1M168 625h1M104 637h1M109 635h1M338 643h1M394 631h1M116 633h1M104 622h1M135 633h1M162 638h1M477 649h1M86 625h1M493 640h1M118 636h1M88 637h1M185 641h1M304 637h1M100 637h1M187 644h1M253 638h1M192 635h1M338 632h1M373 637h1M157 637h1M85 636h1M277 624h1M193 637h1M296 637h1M113 641h1M217 636h1M65 644h1M438 646h1M86 634h1M226 639h1M361 632h1M122 646h1M183 649h1M171 620h1M144 629h1M192 641h1M170 636h1M437 647h1M125 638h1M95 642h1M353 635h1M128 641h1M170 644h1M208 623h1M242 634h1M371 631h1M178 633h1M53 642h1M146 635h1M195 645h1M289 648h1M71 637h1M408 645h1M278 625h1M56 639h1M86 633h1M130 639h1M407 642h1M108 635h1M293 636h1M344 642h1M234 646h1M198 637h1M130 636h1M218 633h1M218 641h1M238 648h1M208 641h1M292 637h1M459 631h1M280 646h1M299 641h1M162 636h1M403 637h1M314 636h1M174 647h1M232 641h1M193 645h1M361 634h1M223 630h1M224 636h1M162 625h1M152 636h1M66 635h1M395 643h1M55 636h1M418 636h1M411 634h1M271 638h1M298 627h1M292 640h1M113 634h1M338 638h1M359 637h1M248 635h1M158 644h1M282 645h1M66 635h1M354 644h1M57 634h1M260 645h1M190 637h1M283 637h1M54 641h1M93 647h1M95 629h1M315 638h1M69 638h1M312 640h1M276 639h1M206 640h1M314 615h1M57 641h1M156 639h1M108 639h1M175 641h1M198 645h1M173 646h1M277 635h1M442 645h1M250 616h1M308 644h1M163 648h1M264 636h1M195 636h1M265 645h1M352 631h1M193 640h1M356 648h1M354 642h1M252 629h1M300 634h1M168 623h1M119 638h1M429 628h1M207 630h1M137 642h1M82 636h1M337 621h1M394 636h1M211 641h1M113 643h1M173 636h1M102 632h1M544 645h1M344 630h1M263 636h1M64 640h1M382 637h1M340 639h1M444 645h1M137 617h1M119 636h1M246 641h1M205 642h1M263 639h1M92 640h1M281 646h1M294 638h1M464 641h1M126 638h1M406 644h1M365 635h1M284 634h1M71 638h1M297 617h1M260 643h1M138 634h1M213 638h1M297 633h1M314 618h1M126 643h1M382 643h1M85 644h1M367 637h1M359 641h1M276 638h1M312 642h1M101 640h1M104 629h1M366 643h1M158 645h1M90 649h1M293 632h1M212 638h1M174 643h1M549 643h1M402 634h1M318 637h1M352 640h1M99 585h1M233 620h1M125 644h1M98 637h1M118 624h1M82 637h1M121 641h1M310 638h1M74 639h1M188 647h1M164 643h1M381 649h1M211 641h1M141 634h1M107 631h1M262 599h1M201 645h1M356 645h1M159 635h1M73 645h1M452 635h1M237 637h1M466 636h1M136 642h1M62 637h1M58 638h1M254 640h1M384 638h1M68 628h1M145 638h1M187 623h1M101 636h1M326 628h1M182 632h1M366 632h1M339 646h1M132 615h1M351 645h1M356 645h1M456 642h1M135 638h1M234 632h1M196 643h1M468 640h1M434 643h1M394 621h1M282 635h1M239 637h1M273 629h1M448 640h1M154 644h1M454 644h1M142 638h1M94 637h1M150 640h1M82 643h1M366 635h1M119 638h1M206 637h1M156 632h1M126 636h1M56 630h1M379 628h1M147 639h1M151 641h1M385 641h1M73 625h1M89 633h1M457 642h1M170 643h1M271 642h1M323 636h1M332 642h1M414 624h1M385 588h1M258 645h1M191 639h1M386 637h1M205 643h1M150 630h1M160 639h1M371 638h1M154 636h1M253 648h1M160 645h1M365 641h1M411 629h1M68 631h1M338 640h1M550 634h1M182 637h1M262 625h1M232 634h1M177 635h1M391 638h1M216 631h1M167 631h1M356 628h1M360 650h1M401 646h1M396 629h1M104 628h1M115 638h1M277 632h1M279 615h1M189 638h1M54 626h1M367 639h1M220 638h1M141 627h1M253 638h1M93 638h1M86 634h1M231 635h1M73 588h1M160 636h1M170 638h1M407 642h1M168 639h1M398 641h1M458 638h1M67 638h1M374 646h1M153 636h1M458 643h1M182 639h1M126 631h1M346 631h1M110 629h1M149 650h1M91 637h1M74 632h1M360 640h1M147 633h1M64 639h1M309 634h1M142 643h1M365 643h1M105 637h1M456 629h1M449 641h1M96 645h1M139 637h1M134 638h1M123 644h1M239 631h1M337 637h1M156 629h1M81 634h1M291 632h1M248 637h1M74 638h1M128 637h1M187 637h1M338 642h1M144 635h1M298 638h1M289 644h1M135 637h1M113 628h1M413 640h1M66 636h1M118 637h1M156 641h1M112 635h1M137 638h1M300 648h1M339 638h1M67 639h1M134 637h1M345 625h1M81 637h1M183 642h1M82 638h1M193 638h1M362 634h1M203 635h1M226 636h1M95 647h1M352 634h1" stroke="#efe30e" stroke-width="1" fill="none" transform="translate(0,0.5)" shape-rendering="crispEdges"/>
<polyline points="53.0,231.7 55.4,252.1 57.5,246.7 60.6,222.2 62.9,231.7 66.6,260.3 68.4,256.9 70.7,242.6 73.1,239.2 76.5,215.4 79.7,236.5 81.6,234.5 84.7,216.8 87.4,226.3 89.7,213.4 92.4,222.2 95.6,252.1 97.6,263.0 100.6,232.4 102.4,238.5 105.1,241.9 107.8,211.3 109.9,218.8 113.5,250.1 115.6,219.5 121.7,208.3 126.9,214.0 129.2,212.0 131.6,213.4 134.6,233.1 136.4,211.3 139.1,253.5 139.8,263.7 142.5,266.4 144.1,227.0 144.8,214.7 147.3,216.1 149.3,214.7 155.9,249.4 158.2,228.3 160.5,223.6 162.5,240.6 165.6,213.4 169.0,215.4 173.4,220.2 177.2,212.7 181.3,212.4 184.0,214.7 186.5,214.7 188.8,222.9 191.5,225.6 194.6,241.9 196.3,243.3 199.4,220.2 202.0,233.1 204.7,217.4 207.8,224.3 212.2,237.2 217.3,216.8 220.3,234.5 223.5,231.1 225.5,220.2 227.1,245.3 228.5,269.1 227.0,245.3 228.4,269.1 229.8,247.4 231.1,224.3 232.5,248.1 233.8,254.9 236.2,259.2 238.6,253.5 245.0,219.5 247.4,218.1 249.5,218.4 251.5,220.9 254.3,215.7 257.2,228.3 259.3,229.7 262.4,244.7 265.4,248.3 266.5,233.1 267.9,228.3 270.2,227.4 275.6,249.4 278.7,235.1 281.5,229.0 283.8,226.6 286.9,235.1 290.6,216.1 293.4,210.6 299.6,244.3 304.3,215.4 306.4,209.3 309.4,219.5 312.8,224.9 314.4,218.8 317.5,222.2 320.2,233.8 322.3,235.1 325.3,210.6 327.3,239.2 330.4,214.7 335.2,232.4 338.6,216.8 340.4,223.3 346.5,214.7 349.1,221.5 351.5,243.3 356.6,214.7 361.5,219.5 364.5,216.8 367.4,248.7 369.5,216.5 376.7,218.8 379.0,222.2 380.8,228.3 382.6,257.6 385.5,242.6 388.3,257.6 390.3,260.3 393.4,233.8 395.7,252.8 398.1,257.9 401.5,239.9 403.2,265.7 404.3,275.3 406.1,260.3 409.5,287.5 414.3,256.2 416.3,271.2 419.3,290.2 424.5,243.3 427.2,249.4 431.3,287.5 432.7,289.6 435.6,214.0 437.4,258.3 440.1,252.8 443.3,253.5 448.3,215.4 450.6,219.5 453.7,254.2 456.5,239.2 458.5,275.3 464.2,267.8 466.4,283.4 469.4,267.1 471.0,273.9 474.6,262.3 477.6,269.1 482.3,291.6 492.5,231.5 495.6,264.4 500.4,232.4 505.4,248.7 508.8,267.8 511.6,269.6 513.6,237.2 516.6,292.3 521.5,228.3 525.9,227.4 529.3,234.5 532.7,251.5 536.1,235.8 538.8,232.4 539.5,235.1 545.6,226.6 547.6,269.6 550.3,250.8 553.5,279.4 557.8,239.9 560.5,233.8 563.3,286.2 566.7,219.2 571.4,276.4 574.8,262.3" fill="none" stroke="#14b4f2" stroke-width="1" stroke-linejoin="miter" shape-rendering="crispEdges"/>
<g font-family='"Liberation Sans", Arial, sans-serif' font-size="11" fill="#000" letter-spacing="-0.15"><text x="48.3" y="175" text-anchor="end">350</text><text x="579.2" y="175">0.35</text><text x="48.3" y="254" text-anchor="end">300</text><text x="579.2" y="254">0.30</text><text x="48.3" y="334" text-anchor="end">250</text><text x="579.2" y="334">0.25</text><text x="48.3" y="414" text-anchor="end">200</text><text x="579.2" y="414">0.20</text><text x="48.3" y="494" text-anchor="end">150</text><text x="579.2" y="494">0.15</text><text x="48.3" y="574" text-anchor="end">100</text><text x="579.2" y="574">0.10</text><text x="48.3" y="654" text-anchor="end">50</text><text x="579.2" y="654">0.05</text><text x="52.8" y="745" text-anchor="middle">0</text><text x="104.8" y="745" text-anchor="middle">6</text><text x="156.8" y="745" text-anchor="middle">12</text><text x="208.8" y="745" text-anchor="middle">18</text><text x="260.8" y="745" text-anchor="middle">24</text><text x="312.8" y="745" text-anchor="middle">30</text><text x="364.8" y="745" text-anchor="middle">36</text><text x="416.8" y="745" text-anchor="middle">42</text><text x="468.8" y="745" text-anchor="middle">48</text><text x="520.8" y="745" text-anchor="middle">54</text><text x="573.8" y="745" text-anchor="middle">60gB</text><text x="53" y="167.6">MB/s</text><text x="574" y="167.6" text-anchor="end">ms</text></g>
</svg>
<div style="position:absolute;left:617px;top:152px;width:71px;height:19px;border:1px solid #acacac;background:linear-gradient(#f2f2f2,#e4e4e4);"></div>
<div style="position:absolute;top:155px;font-size:12px;line-height:16px;height:16px;color:#000;white-space:nowrap;letter-spacing:-0.709px;left:552.45px;width:200px;text-align:center;">Start</div>
<div style="position:absolute;left:608px;top:183px;width:101px;height:1px;background:#a0a0a0;"></div>
<div style="position:absolute;left:608px;top:222px;width:101px;height:1px;background:#a0a0a0;"></div>
<div style="position:absolute;left:608px;top:294px;width:101px;height:1px;background:#a0a0a0;"></div>
<div style="position:absolute;left:608px;top:398px;width:101px;height:1px;background:#a0a0a0;"></div>
<svg style="position:absolute;left:613px;top:189px" width="13" height="13" viewBox="0 0 13 13"><circle cx="6.5" cy="6.5" r="6" fill="#fff" stroke="#555" stroke-width="1"/><circle cx="6.5" cy="6.5" r="3.3" fill="#1a1a1a"/></svg>
<div style="position:absolute;top:188px;font-size:12px;line-height:16px;height:16px;color:#000;white-space:nowrap;letter-spacing:-0.822px;left:629.3px;">Read</div>
<svg style="position:absolute;left:613px;top:205px" width="13" height="13" viewBox="0 0 13 13"><circle cx="6.5" cy="6.5" r="6" fill="#fff" stroke="#555" stroke-width="1"/></svg>
<div style="position:absolute;top:204px;font-size:12px;line-height:16px;height:16px;color:#000;white-space:nowrap;letter-spacing:-0.636px;left:629.3px;">Write</div>
<div style="position:absolute;left:613px;top:230px;width:11px;height:11px;background:#fff;border:1px solid #6c6c6c;"></div>
<div style="position:absolute;top:229px;font-size:12px;line-height:16px;height:16px;color:#000;white-space:nowrap;letter-spacing:-0.666px;left:629.3px;">Short stroke</div>
<div style="position:absolute;left:613px;top:250px;width:60px;height:18px;background:#fff;border:1px solid #d4d4d4;"></div>
<div style="position:absolute;left:657px;top:250px;width:17px;height:18px;background:#e9e9e9;border:1px solid #bcbcbc;border-left:none;"></div>
<div style="position:absolute;left:658px;top:251px;width:14px;height:7px;background:#f1f1f1;border:1px solid #dcdcdc;"></div>
<div style="position:absolute;left:658px;top:260px;width:14px;height:7px;background:#f1f1f1;border:1px solid #dcdcdc;"></div>
<svg style="position:absolute;left:661px;top:253px" width="9" height="15" viewBox="0 0 9 15"><path d="M1.8 4.2L4.4 1.3L7 4.2z M1.8 9.2L4.4 12.1L7 9.2z" fill="#5c5c5c"/></svg>
<div style="position:absolute;top:252px;font-size:12px;line-height:16px;height:16px;color:#8a8a8a;white-space:nowrap;letter-spacing:-0.524px;left:616px;">40</div>
<div style="position:absolute;top:252px;font-size:12px;line-height:16px;height:16px;color:#000;white-space:nowrap;letter-spacing:-0.439px;left:685.7px;">gB</div>
<div style="position:absolute;left:613px;top:279px;width:11px;height:11px;background:#fff;border:1px solid #6c6c6c;"></div><svg style="position:absolute;left:613px;top:279px" width="13" height="13" viewBox="0 0 13 13"><path d="M2.9 6.1L6 9L10.1 3" stroke="#000" stroke-width="2.1" fill="none"/></svg>
<div style="position:absolute;top:278px;font-size:12px;line-height:16px;height:16px;color:#000;white-space:nowrap;letter-spacing:-0.65px;left:629.3px;">Transfer rate</div>
<div style="position:absolute;top:296px;font-size:12px;line-height:16px;height:16px;color:#000;white-space:nowrap;letter-spacing:-1.167px;left:613px;">Minimum</div><div style="position:absolute;left:613px;top:312px;width:91px;height:14px;background:#000;border-left:1px solid #8a8a8a;border-top:1px solid #8a8a8a;"></div><div style="position:absolute;top:312px;font-size:12px;line-height:16px;height:16px;color:#1cb4f8;white-space:nowrap;font-weight:bold;letter-spacing:0.427px;left:559.21px;width:200px;text-align:center;">273.9 MB/s</div>
<div style="position:absolute;top:329px;font-size:12px;line-height:16px;height:16px;color:#000;white-space:nowrap;letter-spacing:-1.272px;left:613px;">Maximum</div><div style="position:absolute;left:613px;top:344px;width:91px;height:14px;background:#000;border-left:1px solid #8a8a8a;border-top:1px solid #8a8a8a;"></div><div style="position:absolute;top:344px;font-size:12px;line-height:16px;height:16px;color:#1cb4f8;white-space:nowrap;font-weight:bold;letter-spacing:0.427px;left:559.21px;width:200px;text-align:center;">326.7 MB/s</div>
<div style="position:absolute;top:359px;font-size:12px;line-height:16px;height:16px;color:#000;white-space:nowrap;letter-spacing:-0.669px;left:613px;">Average</div><div style="position:absolute;left:613px;top:375px;width:91px;height:14px;background:#000;border-left:1px solid #8a8a8a;border-top:1px solid #8a8a8a;"></div><div style="position:absolute;top:375px;font-size:12px;line-height:16px;height:16px;color:#1cb4f8;white-space:nowrap;font-weight:bold;letter-spacing:0.427px;left:559.21px;width:200px;text-align:center;">307.8 MB/s</div>
<div style="position:absolute;left:613px;top:404px;width:11px;height:11px;background:#fff;border:1px solid #6c6c6c;"></div><svg style="position:absolute;left:613px;top:404px" width="13" height="13" viewBox="0 0 13 13"><path d="M2.9 6.1L6 9L10.1 3" stroke="#000" stroke-width="2.1" fill="none"/></svg>
<div style="position:absolute;top:403px;font-size:12px;line-height:16px;height:16px;color:#000;white-space:nowrap;letter-spacing:-0.717px;left:629.3px;">Access time</div>
<div style="position:absolute;left:613px;top:419px;width:91px;height:14px;background:#000;border-left:1px solid #8a8a8a;border-top:1px solid #8a8a8a;"></div><div style="position:absolute;top:419px;font-size:12px;line-height:16px;height:16px;color:#ffff30;white-space:nowrap;font-weight:bold;letter-spacing:0.037px;left:559.02px;width:200px;text-align:center;">0.058 ms</div>
<div style="position:absolute;left:613px;top:438px;width:11px;height:11px;background:#fff;border:1px solid #6c6c6c;"></div><svg style="position:absolute;left:613px;top:438px" width="13" height="13" viewBox="0 0 13 13"><path d="M2.9 6.1L6 9L10.1 3" stroke="#000" stroke-width="2.1" fill="none"/></svg>
<div style="position:absolute;top:437px;font-size:12px;line-height:16px;height:16px;color:#000;white-space:nowrap;letter-spacing:-0.742px;left:629.3px;">Burst rate</div>
<div style="position:absolute;left:613px;top:453px;width:91px;height:14px;background:#000;border-left:1px solid #8a8a8a;border-top:1px solid #8a8a8a;"></div><div style="position:absolute;top:453px;font-size:12px;line-height:16px;height:16px;color:#fff;white-space:nowrap;font-weight:bold;letter-spacing:0.427px;left:559.21px;width:200px;text-align:center;">139.1 MB/s</div>
<div style="position:absolute;top:470px;font-size:12px;line-height:16px;height:16px;color:#000;white-space:nowrap;letter-spacing:-0.774px;left:613px;">CPU usage</div><div style="position:absolute;left:613px;top:486px;width:91px;height:14px;background:#000;border-left:1px solid #8a8a8a;border-top:1px solid #8a8a8a;"></div><div style="position:absolute;top:486px;font-size:12px;line-height:16px;height:16px;color:#fff;white-space:nowrap;font-weight:bold;letter-spacing:-0.045px;left:558.98px;width:200px;text-align:center;">15.5%</div>
</div>
<div style="position:absolute;left:732px;top:0;width:732px;height:772px;background:#b7b7b7;overflow:hidden;">
<div style="position:absolute;left:0px;top:0px;width:732px;height:1px;background:#8c8c8c;"></div>
<div style="position:absolute;left:0px;top:0px;width:1px;height:772px;background:#8c8c8c;"></div>
<svg style="position:absolute;left:11px;top:8px" width="15" height="14" viewBox="0 0 15 14"><path d="M7.6 0.2L14.3 4.5L6.6 13.3L0.2 8.2Z" fill="#2a2a2c"/><path d="M0.2 8.2L6.6 13.3L6.6 14L0.2 9z" fill="#151515"/><ellipse cx="8.5" cy="4.9" rx="4" ry="3.1" transform="rotate(-12 8.5 4.9)" fill="#f3ad58"/><ellipse cx="8.1" cy="4.3" rx="2.2" ry="1.5" fill="#f8c884" opacity=".7"/><ellipse cx="8.4" cy="4.9" rx="1.1" ry=".9" fill="#9fb4cc"/><path d="M4.3 8.4L7.3 10.6" stroke="#8a8a8a" stroke-width="2.2"/></svg>
<div style="position:absolute;top:6px;font-size:15px;line-height:19px;height:19px;color:#141414;white-space:nowrap;letter-spacing:-0.142px;left:266.13px;width:200px;text-align:center;left:66px;width:600px;">HD Tune Pro 5.50 - Hard Disk/SSD Utility</div>
<div style="position:absolute;left:636px;top:13px;width:8px;height:2px;background:#000;"></div>
<div style="position:absolute;left:662px;top:7px;width:8px;height:5px;border:1px solid #000;border-top-width:2px;"></div>
<div style="position:absolute;left:680px;top:1px;width:45px;height:20px;background:#e5504f;"></div>
<svg style="position:absolute;left:698px;top:7px" width="10" height="9" viewBox="0 0 10 9"><path d="M1.3 1.1L8.6 8.1M8.6 1.1L1.3 8.1" stroke="#fff" stroke-width="1.8"/></svg>
<div style="position:absolute;left:7px;top:30px;width:718px;height:735px;background:#a2a2a2;"></div>
<div style="position:absolute;left:0px;top:771px;width:732px;height:1px;background:#8c8c8c;"></div>
<div style="position:absolute;left:8px;top:31px;width:716px;height:733px;background:#f0f0f0;"></div>
<div style="position:absolute;left:8px;top:31px;width:716px;height:19px;background:#dce6f1;"></div>
<div style="position:absolute;top:33px;font-size:12px;line-height:16px;height:16px;color:#000;white-space:nowrap;letter-spacing:-0.209px;left:15.3px;"><u>F</u>ile</div>
<div style="position:absolute;top:33px;font-size:12px;line-height:16px;height:16px;color:#000;white-space:nowrap;letter-spacing:0.005px;left:51px;"><u>H</u>elp</div>
<div style="position:absolute;left:8px;top:50px;width:716px;height:45px;background:linear-gradient(#f1f1f1,#ececec 30%,#d2d2d2);"></div>
<div style="position:absolute;left:8px;top:95px;width:716px;height:1px;background:#000;"></div>
<div style="position:absolute;left:8px;top:96px;width:716px;height:1px;background:#fafafa;"></div>
<div style="position:absolute;left:19px;top:59px;width:360px;height:19px;border:1px solid #a7abb0;background:linear-gradient(#f0f1f3,#e5e7e9);"></div>
<div style="position:absolute;top:62px;font-size:12px;line-height:16px;height:16px;color:#000;white-space:nowrap;letter-spacing:-0.764px;left:23.2px;">SSD Smartbuy 120GB (120 gB)</div>
<svg style="position:absolute;left:368px;top:66px" width="10" height="8" viewBox="0 0 10 8"><path d="M1.6 1.2L4.7 5.4L7.8 1.2" stroke="#404040" stroke-width="2" fill="none"/></svg>
<div style="position:absolute;left:392px;top:57px;width:25px;height:24px;border:1px solid #acacac;background:linear-gradient(#f2f2f2,#e4e4e4);"></div>
<svg style="position:absolute;left:397px;top:61px;overflow:visible" width="18" height="18" viewBox="0 0 18 18"><rect x="6.6" y="0.4" width="5" height="12" rx="1" fill="#101010"/><rect x="6.7" y="0.9" width="3.9" height="11.5" fill="#f01414"/><rect x="6.7" y="0.9" width="3.9" height="3" fill="#28d8e0"/><ellipse cx="8.7" cy="13.4" rx="4.5" ry="3.6" fill="#101010"/><ellipse cx="8.3" cy="13.1" rx="3.9" ry="3.1" fill="#f01414"/><path d="M4.5 11.6L5.6 10.2V14" stroke="#28d8e0" stroke-width="1" fill="none"/><path d="M7 12.2C7 13 7.4 13.6 8.2 13.8" stroke="#fff" stroke-width="1" fill="none"/></svg>
<div style="position:absolute;top:63px;font-size:12px;line-height:16px;height:16px;color:#000;white-space:nowrap;font-weight:bold;left:421.6px;"><span style="display:inline-block;transform:scaleX(1.42);transform-origin:0 50%;">–</span><span style="display:inline-block;width:5.8px"> </span><span style="letter-spacing:0.1px">°C</span></div>
<div style="position:absolute;left:495px;top:57px;width:25px;height:24px;border:1px solid #2b9bff;background:linear-gradient(#f0f0f0,#e5e5e5);box-shadow:inset 0 0 0 0.5px #7cc0ff;"></div>
<svg style="position:absolute;left:500px;top:61px;overflow:visible" width="18" height="18" viewBox="0 0 18 18"><path d="M1.1 1.2H6.1L7.699999999999999 2.8V13.6H1.1Z" fill="#f4f4f6" stroke="#101010" stroke-width="1.1"/><path d="M6.1 1.2V2.8H7.699999999999999" fill="#fff" stroke="#101010" stroke-width=".7"/><path d="M8.299999999999999 3.4000000000000004V14.2H2.1" stroke="#101010" stroke-width=".9" fill="none"/><path d="M2.9 5.5H7.6M2.9 7.5H7.6M2.9 9.6H7.6" stroke="#1e96ff" stroke-width="1.1"/><path d="M7.4 3.2H14.200000000000001L15.8 4.800000000000001V15.8H7.4Z" fill="#f4f4f6" stroke="#101010" stroke-width="1.1"/><path d="M14.200000000000001 3.2V4.800000000000001H15.8" fill="#fff" stroke="#101010" stroke-width=".7"/><path d="M16.400000000000002 5.4V16.400000000000002H8.4" stroke="#101010" stroke-width=".9" fill="none"/><path d="M9.2 7.5H13.9M9.2 9.6H13.9M9.2 11.7H13.9" stroke="#2070ff" stroke-width="1.1"/></svg>
<div style="position:absolute;left:525px;top:57px;width:25px;height:24px;border:1px solid #acacac;background:linear-gradient(#f2f2f2,#e4e4e4);"></div>
<svg style="position:absolute;left:530px;top:61px;overflow:visible" width="18" height="18" viewBox="0 0 18 18"><path d="M1.1 1.2H6.1L7.699999999999999 2.8V13.6H1.1Z" fill="#f4f4f6" stroke="#101010" stroke-width="1.1"/><path d="M6.1 1.2V2.8H7.699999999999999" fill="#fff" stroke="#101010" stroke-width=".7"/><path d="M8.299999999999999 3.4000000000000004V14.2H2.1" stroke="#101010" stroke-width=".9" fill="none"/><rect x="2.9" y="5" width="4.2" height="5.6" fill="#10d020"/><rect x="2.9" y="5" width="4.2" height="1.2" fill="#20c8f0"/><rect x="4.9" y="7.8" width="1.4" height="2" fill="#e8e000"/><rect x="4.7" y="6.8" width="1.3" height="1.3" fill="#f01010"/><path d="M7.4 3.2H14.200000000000001L15.8 4.800000000000001V15.8H7.4Z" fill="#f4f4f6" stroke="#101010" stroke-width="1.1"/><path d="M14.200000000000001 3.2V4.800000000000001H15.8" fill="#fff" stroke="#101010" stroke-width=".7"/><path d="M16.400000000000002 5.4V16.400000000000002H8.4" stroke="#101010" stroke-width=".9" fill="none"/><rect x="9" y="7" width="4.2" height="5.6" fill="#10d020"/><rect x="9" y="7" width="4.2" height="1.2" fill="#20c8f0"/><rect x="11" y="9.8" width="1.4" height="2" fill="#e8e000"/><rect x="10.8" y="8.8" width="1.3" height="1.3" fill="#f01010"/><rect x="13" y="12.3" width="1.2" height="1.2" fill="#101010"/></svg>
<div style="position:absolute;left:555px;top:57px;width:25px;height:24px;border:1px solid #acacac;background:linear-gradient(#f2f2f2,#e4e4e4);"></div>
<svg style="position:absolute;left:560px;top:61px;overflow:visible" width="18" height="18" viewBox="0 0 18 18"><path d="M0.3 5.8C0.3 4.8 1 4.6 2 4.6H4.2L5.2 1.3H12.2L13.2 4.6H15C16.2 4.6 16.8 5 16.8 6V14.8H0.3Z" fill="#fff"/><path d="M5.4 5.6V4C5.4 2.9 6.2 2.6 7.2 2.6H10C11 2.6 11.9 2.9 11.9 4V5.6" fill="#f4f4f4" stroke="#161616" stroke-width="1.1"/><rect x="1" y="5.5" width="15.1" height="8.5" rx=".8" fill="#242424"/><path d="M4.5 5.8V13.8" stroke="#7a7a7a" stroke-width=".8"/><circle cx="8.4" cy="9.5" r="2.5" fill="#fafafa"/><rect x="12.2" y="7.3" width="2.1" height="1.9" fill="#10e030"/></svg>
<div style="position:absolute;left:585px;top:57px;width:25px;height:24px;border:1px solid #acacac;background:linear-gradient(#f2f2f2,#e4e4e4);"></div>
<svg style="position:absolute;left:590px;top:61px;overflow:visible" width="18" height="18" viewBox="0 0 18 18"><polygon points="10.80,5.90 9.57,7.13 9.72,8.86 7.99,9.01 7.00,10.43 5.58,9.43 3.90,9.88 3.45,8.21 1.88,7.47 2.61,5.90 1.88,4.33 3.45,3.59 3.90,1.92 5.58,2.37 7.00,1.37 7.99,2.79 9.72,2.94 9.57,4.67" fill="#e0e000" stroke="#5a5a00" stroke-width="1" stroke-linejoin="round"/><rect x="5.5" y="1.4" width="1.5" height="5.2" fill="#c8c8d4" stroke="#55555f" stroke-width=".5"/><polygon points="16.60,11.50 15.21,12.89 15.38,14.84 13.43,15.01 12.30,16.62 10.70,15.49 8.80,16.00 8.29,14.11 6.51,13.28 7.34,11.50 6.51,9.72 8.29,8.89 8.80,7.00 10.70,7.51 12.30,6.38 13.43,7.99 15.38,8.16 15.21,10.11" fill="#e0e000" stroke="#5a5a00" stroke-width="1" stroke-linejoin="round"/><rect x="10.7" y="7.2" width="1.5" height="5.2" fill="#c8c8d4" stroke="#55555f" stroke-width=".5"/></svg>
<div style="position:absolute;left:620px;top:57px;width:25px;height:24px;border:1px solid #acacac;background:linear-gradient(#f2f2f2,#e4e4e4);"></div>
<svg style="position:absolute;left:624px;top:60px;overflow:visible" width="19" height="19" viewBox="0 0 19 19"><defs><linearGradient id="mg" x1="0" y1="0" x2="0.6" y2="1"><stop offset="0" stop-color="#f478e4"/><stop offset=".35" stop-color="#e418cc"/><stop offset=".85" stop-color="#d010b8"/><stop offset="1" stop-color="#9c0888"/></linearGradient></defs><rect x="-0.7" y="-0.7" width="20.4" height="20.4" rx="2.4" fill="#fff" opacity=".85"/><rect x="0" y="0" width="19" height="19.2" rx="1.8" fill="url(#mg)"/><rect x="8" y="2.1" width="2" height="10" fill="#fff"/><path d="M2.9 11.4H15.1L9 17.2Z" fill="#fff"/></svg>
<div style="position:absolute;left:660px;top:57px;width:50px;height:24px;border:1px solid #acacac;background:linear-gradient(#f2f2f2,#e4e4e4);"></div>
<div style="position:absolute;top:62px;font-size:12px;line-height:16px;height:16px;color:#000;white-space:nowrap;letter-spacing:-0.926px;left:584.74px;width:200px;text-align:center;">Exit</div>
<div style="position:absolute;left:21px;top:99px;width:153px;height:20px;border:1px solid #acacac;background:linear-gradient(#f1f1f1,#ebebeb);border-bottom:none;"></div>
<div style="position:absolute;left:176px;top:99px;width:138px;height:20px;border:1px solid #acacac;background:linear-gradient(#f1f1f1,#ebebeb);border-bottom:none;"></div>
<div style="position:absolute;left:316px;top:99px;width:103px;height:20px;border:1px solid #acacac;background:linear-gradient(#f1f1f1,#ebebeb);border-bottom:none;"></div>
<div style="position:absolute;left:421px;top:99px;width:158px;height:20px;border:1px solid #acacac;background:linear-gradient(#f1f1f1,#ebebeb);border-bottom:none;"></div>
<div style="position:absolute;left:581px;top:99px;width:127px;height:20px;border:1px solid #acacac;background:linear-gradient(#f1f1f1,#ebebeb);border-bottom:none;"></div>
<div style="position:absolute;left:152px;top:119px;width:90px;height:20px;border:1px solid #acacac;background:linear-gradient(#f1f1f1,#ebebeb);border-bottom:none;border-left:none;"></div>
<div style="position:absolute;left:243px;top:119px;width:104px;height:20px;border:1px solid #acacac;background:linear-gradient(#f1f1f1,#ebebeb);border-bottom:none;"></div>
<div style="position:absolute;left:349px;top:119px;width:123px;height:20px;border:1px solid #acacac;background:linear-gradient(#f1f1f1,#ebebeb);border-bottom:none;"></div>
<div style="position:absolute;left:474px;top:119px;width:135px;height:20px;border:1px solid #acacac;background:linear-gradient(#f1f1f1,#ebebeb);border-bottom:none;"></div>
<div style="position:absolute;left:611px;top:119px;width:97px;height:20px;border:1px solid #acacac;background:linear-gradient(#f1f1f1,#ebebeb);border-bottom:none;"></div>
<div style="position:absolute;left:19px;top:139px;width:691px;height:621px;background:#fff;border:1px solid #acacac;"></div>
<div style="position:absolute;left:19px;top:117px;width:131px;height:22px;background:#fff;border:1px solid #acacac;border-bottom:none;"></div>
<svg style="position:absolute;left:50px;top:101px;overflow:visible" width="15" height="17" viewBox="0 0 15 17"><path d="M0.7 0.7H10.4L13.5 3.8V15.4H0.7Z" fill="#e4e4e6" stroke="#0c0c0c" stroke-width="1.3"/><path d="M1.6 1.6H6V14.5H1.6Z" fill="#f4f4f4" opacity=".7"/><path d="M10.4 0.7V3.8H13.5" fill="#fff" stroke="#0c0c0c" stroke-width="1"/><path d="M7 2.2C9.7 2.2 10 4.8 8.8 7.6L8.1 10.2H5.9L5.2 7.6C4 4.8 4.3 2.2 7 2.2Z" fill="#f018e4" stroke="#1a001a" stroke-width="1"/><ellipse cx="7" cy="12.6" rx="1.9" ry="1.2" fill="#f018e4" stroke="#1a001a" stroke-width="1"/></svg>
<div style="position:absolute;top:102px;font-size:12px;line-height:16px;height:16px;color:#000;white-space:nowrap;letter-spacing:-0.755px;left:73px;">File Benchmark</div>
<svg style="position:absolute;left:205px;top:101px;overflow:visible" width="17" height="17" viewBox="0 0 17 17"><defs><linearGradient id="cr" x1="0" y1="0" x2="1" y2="1"><stop offset="0" stop-color="#fffff0"/><stop offset="1" stop-color="#ffff98"/></linearGradient></defs><rect x="0.6" y="0.6" width="15" height="15" fill="url(#cr)" stroke="#0c0c0c" stroke-width="1.3"/><path d="M15.9 1V16.1H1" stroke="#0c0c0c" stroke-width="1" fill="none"/><rect x="1.2" y="7.1" width="1.8" height="7.9" fill="#00f000"/><rect x="3" y="10.1" width="1.9" height="4.9" fill="#4038ff"/><rect x="4.9" y="10.9" width="1.9" height="4.1" fill="#00f000"/><rect x="6.8" y="6" width="1.4" height="9.0" fill="#4038ff"/><rect x="8.2" y="7.1" width="3.0" height="7.9" fill="#00f000"/><rect x="11.2" y="9" width="1.9" height="6.0" fill="#4038ff"/><rect x="13.1" y="9.8" width="1.9" height="5.2" fill="#00f000"/></svg>
<div style="position:absolute;top:102px;font-size:12px;line-height:16px;height:16px;color:#000;white-space:nowrap;letter-spacing:-0.657px;left:228px;">Disk monitor</div>
<svg style="position:absolute;left:345px;top:101px;overflow:visible" width="17" height="16" viewBox="0 0 17 16"><path d="M0.5 5.3L1.7 4.8L9.4 0.5H10.5V14.6H9.4L1.7 9.3L0.5 8.8Z" fill="#f0f000" stroke="#0c0c0c" stroke-width="1.1"/><path d="M7.3 2.2V12.8" stroke="#8a8a00" stroke-width="1"/><path d="M8.6 6.4v2.2" stroke="#333" stroke-width="1.2"/><path d="M12.3 4.6C13.9 5.9 13.9 8.6 12.3 9.9" stroke="#0c0c0c" stroke-width="1.1" fill="none"/><path d="M13.6 2.6C16.6 5 16.6 9.4 13.6 11.8" stroke="#0c0c0c" stroke-width="1.1" fill="none"/></svg>
<div style="position:absolute;top:102px;font-size:12px;line-height:16px;height:16px;color:#000;white-space:nowrap;letter-spacing:-1.235px;left:368px;">AAM</div>
<svg style="position:absolute;left:450px;top:101px;overflow:visible" width="17" height="17" viewBox="0 0 17 17"><rect x="0.6" y="0.6" width="15" height="15" fill="url(#cr2)" stroke="#0c0c0c" stroke-width="1.3"/><defs><linearGradient id="cr2" x1="0" y1="0" x2="1" y2="1"><stop offset="0" stop-color="#fffff0"/><stop offset="1" stop-color="#ffff98"/></linearGradient></defs><path d="M15.9 1V16.1H1" stroke="#0c0c0c" stroke-width="1" fill="none"/><rect x="2.95" y="6.75" width="1.1" height="1.1" fill="#1010ff"/><rect x="1.85" y="8.95" width="1.1" height="1.1" fill="#1010ff"/><rect x="4.85" y="9.75" width="1.1" height="1.1" fill="#1010ff"/><rect x="6.95" y="6.75" width="1.1" height="1.1" fill="#1010ff"/><rect x="8.95" y="4.85" width="1.1" height="1.1" fill="#1010ff"/><rect x="10.85" y="3.85" width="1.1" height="1.1" fill="#1010ff"/><rect x="10.85" y="5.95" width="1.1" height="1.1" fill="#1010ff"/><rect x="2.95" y="9.75" width="1.1" height="1.1" fill="#ff1010"/><rect x="2.95" y="11.95" width="1.1" height="1.1" fill="#ff1010"/><rect x="1.85" y="13.85" width="1.1" height="1.1" fill="#ff1010"/><rect x="6.95" y="8.95" width="1.1" height="1.1" fill="#ff1010"/><rect x="6.95" y="11.95" width="1.1" height="1.1" fill="#ff1010"/><rect x="8.95" y="10.85" width="1.1" height="1.1" fill="#ff1010"/><rect x="10.85" y="8.95" width="1.1" height="1.1" fill="#ff1010"/><rect x="11.95" y="10.85" width="1.1" height="1.1" fill="#ff1010"/></svg>
<div style="position:absolute;top:102px;font-size:12px;line-height:16px;height:16px;color:#000;white-space:nowrap;letter-spacing:-0.685px;left:473px;">Random Access</div>
<svg style="position:absolute;left:610px;top:101px;overflow:visible" width="17" height="17" viewBox="0 0 17 17"><defs><linearGradient id="cr3" x1="0" y1="0" x2="1" y2="1"><stop offset="0" stop-color="#fffff0"/><stop offset="1" stop-color="#ffff98"/></linearGradient></defs><rect x="0.6" y="0.6" width="15" height="15" fill="url(#cr3)" stroke="#0c0c0c" stroke-width="1.3"/><path d="M15.9 1V16.1H1" stroke="#0c0c0c" stroke-width="1" fill="none"/><rect x="1.2" y="6.8" width="1.8" height="8.2" fill="#00f000"/><rect x="3" y="10" width="1.9" height="5" fill="#4038ff"/><rect x="4.9" y="10.9" width="1.4" height="4.1" fill="#00f000"/><rect x="6.5" y="6.5" width="8.8" height="8.8" fill="#f4f4f4" stroke="#0c0c0c" stroke-width="1"/><rect x="7" y="6.9" width="7.8" height="1.1" fill="#1010ff"/><rect x="7.90" y="9.00" width="1" height="1" fill="#ff1010"/><rect x="9.90" y="9.00" width="1" height="1" fill="#1010ff"/><rect x="12.00" y="9.00" width="1" height="1" fill="#ff1010"/><rect x="7.90" y="10.90" width="1" height="1" fill="#00c000"/><rect x="9.90" y="10.90" width="1" height="1" fill="#ff1010"/><rect x="12.00" y="10.90" width="1" height="1" fill="#ff1010"/><rect x="7.90" y="12.80" width="1" height="1" fill="#ff1010"/><rect x="9.90" y="12.80" width="1" height="1" fill="#ff1010"/><rect x="12.00" y="12.80" width="1" height="1" fill="#1010ff"/></svg>
<div style="position:absolute;top:102px;font-size:12px;line-height:16px;height:16px;color:#000;white-space:nowrap;letter-spacing:-0.717px;left:633px;">Extra tests</div>
<svg style="position:absolute;left:178px;top:121px;overflow:visible" width="10" height="17" viewBox="0 0 10 17"><defs><linearGradient id="ib" x1="0" y1="0" x2="1" y2="1"><stop offset="0" stop-color="#0a90ff"/><stop offset="1" stop-color="#0838f0"/></linearGradient></defs><rect x="2.4" y="0.5" width="5.3" height="4" rx="1.2" fill="#08c4fa" stroke="#0c0c0c" stroke-width="1.1"/><path d="M1.4 6.6H7.6V14.5L8.6 15V15.6H0.6V15L2.6 14.4V7.8H1.4Z" fill="url(#ib)" stroke="#0c0c0c" stroke-width="1.1"/></svg>
<div style="position:absolute;top:122px;font-size:12px;line-height:16px;height:16px;color:#000;white-space:nowrap;letter-spacing:-0.554px;left:198px;">Info</div>
<svg style="position:absolute;left:268px;top:121px;overflow:visible" width="17" height="17" viewBox="0 0 17 17"><path d="M5.4 0.5H10.4V5.5H15.4V10.5H10.4V15.5H5.4V10.5H0.5V5.5H5.4Z" fill="#ff2020" stroke="#0c0c0c" stroke-width="1.1"/><path d="M6.3 1.5H8V6.4H1.5" stroke="#ff7070" stroke-width=".9" fill="none" opacity=".8"/><path d="M11 10.9V16.1H6" stroke="#333" stroke-width=".8" fill="none" opacity=".6"/></svg>
<div style="position:absolute;top:122px;font-size:12px;line-height:16px;height:16px;color:#000;white-space:nowrap;letter-spacing:-0.648px;left:291px;">Health</div>
<svg style="position:absolute;left:374px;top:121px;overflow:visible" width="17" height="17" viewBox="0 0 17 17"><path d="M8.3 8.2L14.6 14.6" stroke="#0c0c0c" stroke-width="4.4" stroke-linecap="round"/><path d="M8.3 8.2L14.4 14.4" stroke="#1010e0" stroke-width="2.6" stroke-linecap="round"/><path d="M3.4 0.5H7.7L10.6 3.2V6.9L7.7 9.7H3.4L0.5 6.9V3.2Z" fill="#08ee38" stroke="#0c0c0c" stroke-width="1.1"/><path d="M3.2 3.6L4.8 2M6 7.4L8.3 5" stroke="#d8ffe0" stroke-width=".9"/></svg>
<div style="position:absolute;top:122px;font-size:12px;line-height:16px;height:16px;color:#000;white-space:nowrap;letter-spacing:-0.825px;left:397px;">Error Scan</div>
<svg style="position:absolute;left:499px;top:121px;overflow:visible" width="16" height="17" viewBox="0 0 16 17"><defs><linearGradient id="fg" x1="0" y1="0" x2="1" y2="1"><stop offset="0" stop-color="#ffe400"/><stop offset="1" stop-color="#f0a000"/></linearGradient></defs><path d="M0.6 15.6V1.8L1.8 0.5H6.2L7.3 2.4H12.8V5H2.6V15.6Z" fill="#ffe000" stroke="#0c0c0c" stroke-width="1.1"/><path d="M7 3.3h5" stroke="#fff8b0" stroke-width=".9"/><rect x="2.6" y="4.8" width="11.9" height="10.9" fill="url(#fg)" stroke="#0c0c0c" stroke-width="1.2"/><path d="M3.6 5.8V14.8" stroke="#fffad0" stroke-width=".9"/><path d="M12.4 5.5V15" stroke="#a8a8a8" stroke-width=".8"/></svg>
<div style="position:absolute;top:122px;font-size:12px;line-height:16px;height:16px;color:#000;white-space:nowrap;letter-spacing:-0.82px;left:522px;">Folder Usage</div>
<svg style="position:absolute;left:636px;top:121px;overflow:visible" width="15" height="17" viewBox="0 0 15 17"><defs><linearGradient id="tg" x1="0" y1="0" x2="1" y2="0"><stop offset="0" stop-color="#444"/><stop offset=".27" stop-color="#f8f8f8"/><stop offset=".42" stop-color="#8a8a8a"/><stop offset=".7" stop-color="#2a2a2a"/><stop offset=".88" stop-color="#888"/><stop offset="1" stop-color="#333"/></linearGradient></defs><rect x="1.4" y="3.2" width="11.2" height="11.8" fill="url(#tg)" stroke="#0c0c0c" stroke-width="1.3"/><path d="M4.3 4V14.5M9 4V14.5" stroke="#222" stroke-width=".5" opacity=".5"/><rect x="0.2" y="1.2" width="13.7" height="2.5" fill="#0c0c0c"/><rect x="5.3" y="0" width="3.8" height="1.6" fill="#0c0c0c"/><path d="M1.2 2.4H8" stroke="#ddd" stroke-width="1"/><path d="M8 2.4H13" stroke="#777" stroke-width="1"/></svg>
<div style="position:absolute;top:122px;font-size:12px;line-height:16px;height:16px;color:#000;white-space:nowrap;letter-spacing:-0.91px;left:659px;">Erase</div>
<svg style="position:absolute;left:50px;top:119px;overflow:visible" width="10" height="17" viewBox="0 0 10 17"><path d="M3.9 0.8C6.8 0.8 7.4 3 6.6 6.5L5.5 11.4H2.4L1.2 6.5C0.4 3 1 0.8 3.9 0.8Z" fill="#d6d600" stroke="#0c0c0c" stroke-width="1.1"/><path d="M2.6 2.2C2 3.5 2.2 5.5 3 8.5" stroke="#f4f450" stroke-width="1" fill="none"/><path d="M6.9 3.5C7.6 5 6.9 8 6.2 11.6" stroke="#555" stroke-width=".9" fill="none"/><ellipse cx="3.9" cy="14.3" rx="2.3" ry="1.4" fill="#d6d600" stroke="#0c0c0c" stroke-width="1.1"/></svg>
<div style="position:absolute;top:120px;font-size:12px;line-height:16px;height:16px;color:#000;white-space:nowrap;letter-spacing:-0.71px;left:69px;">Benchmark</div>
<svg style="position:absolute;left:0;top:0" width="732" height="772" viewBox="0 0 732 772">
<defs><linearGradient id="cg" x1="0" y1="0" x2="0" y2="1"><stop offset="0" stop-color="#000"/><stop offset="0.2" stop-color="#060606"/><stop offset="1" stop-color="#404040"/></linearGradient></defs>
<rect x="51" y="169" width="525" height="563" fill="#000"/>
<rect x="53" y="171" width="522" height="559" fill="url(#cg)"/>
<rect x="53" y="171" width="1" height="564" fill="#767676"/><rect x="79" y="171" width="1" height="562" fill="#484848"/><rect x="105" y="171" width="1" height="564" fill="#767676"/><rect x="131" y="171" width="1" height="562" fill="#484848"/><rect x="157" y="171" width="1" height="564" fill="#767676"/><rect x="183" y="171" width="1" height="562" fill="#484848"/><rect x="209" y="171" width="1" height="564" fill="#767676"/><rect x="235" y="171" width="1" height="562" fill="#484848"/><rect x="261" y="171" width="1" height="564" fill="#767676"/><rect x="287" y="171" width="1" height="562" fill="#484848"/><rect x="313" y="171" width="1" height="564" fill="#767676"/><rect x="339" y="171" width="1" height="562" fill="#484848"/><rect x="365" y="171" width="1" height="564" fill="#767676"/><rect x="391" y="171" width="1" height="562" fill="#484848"/><rect x="417" y="171" width="1" height="564" fill="#767676"/><rect x="443" y="171" width="1" height="562" fill="#484848"/><rect x="469" y="171" width="1" height="564" fill="#767676"/><rect x="495" y="171" width="1" height="562" fill="#484848"/><rect x="521" y="171" width="1" height="564" fill="#767676"/><rect x="547" y="171" width="1" height="562" fill="#484848"/><rect x="574" y="171" width="1" height="564" fill="#767676"/><rect x="50" y="171" width="527" height="1" fill="#767676"/><rect x="51" y="210" width="524" height="1" fill="#484848"/><rect x="50" y="250" width="527" height="1" fill="#767676"/><rect x="51" y="290" width="524" height="1" fill="#484848"/><rect x="50" y="330" width="527" height="1" fill="#767676"/><rect x="51" y="370" width="524" height="1" fill="#484848"/><rect x="50" y="410" width="527" height="1" fill="#767676"/><rect x="51" y="450" width="524" height="1" fill="#484848"/><rect x="50" y="490" width="527" height="1" fill="#767676"/><rect x="51" y="530" width="524" height="1" fill="#484848"/><rect x="50" y="570" width="527" height="1" fill="#767676"/><rect x="51" y="610" width="524" height="1" fill="#484848"/><rect x="50" y="650" width="527" height="1" fill="#767676"/><rect x="51" y="690" width="524" height="1" fill="#484848"/>
<path d="M208 638h1M227 630h1M116 625h1M85 625h1M84 632h1M528 632h1M285 633h1M234 629h1M118 620h1M204 634h1M231 624h1M210 633h1M549 639h1M161 619h1M152 629h1M393 628h1M495 638h1M445 634h1M525 641h1M346 637h1M82 641h1M93 627h1M87 628h1M245 629h1M118 638h1M93 638h1M126 642h1M157 631h1M125 637h1M87 626h1M126 629h1M154 622h1M83 632h1M180 640h1M496 624h1M115 622h1M444 634h1M327 637h1M120 638h1M197 622h1M66 633h1M141 641h1M258 637h1M76 617h1M245 629h1M451 631h1M58 627h1M113 633h1M249 619h1M526 643h1M303 634h1M59 633h1M308 641h1M218 634h1M162 639h1M326 636h1M326 636h1M174 621h1M438 625h1M407 638h1M271 626h1M80 628h1M543 633h1M325 628h1M204 641h1M63 637h1M218 627h1M266 627h1M140 586h1M297 622h1M288 644h1M430 632h1M201 629h1M449 628h1M161 623h1M223 638h1M484 627h1M111 632h1M195 636h1M222 641h1M208 609h1M63 641h1M249 635h1M353 602h1M209 536h1M134 618h1M206 635h1M286 641h1M121 630h1M114 569h1M315 630h1M306 638h1M266 625h1M442 622h1M464 638h1M271 637h1M182 640h1M476 627h1M284 628h1M279 623h1M126 648h1M237 631h1M163 636h1M81 628h1M242 631h1M363 631h1M357 623h1M101 617h1M230 637h1M478 626h1M483 630h1M152 639h1M278 637h1M160 626h1M392 636h1M509 644h1M250 620h1M261 523h1M230 631h1M357 625h1M75 633h1M195 637h1M215 627h1M202 638h1M162 624h1M267 640h1M60 619h1M131 630h1M268 623h1M323 624h1M121 632h1M203 627h1M107 624h1M274 622h1M264 631h1M133 637h1M161 621h1M456 645h1M99 630h1M321 642h1M198 639h1M96 632h1M122 631h1M446 639h1M336 638h1M301 627h1M65 633h1M230 635h1M123 635h1M539 636h1M486 635h1M340 627h1M200 634h1M57 634h1M209 630h1M192 625h1M58 638h1M358 638h1M192 627h1M226 634h1M446 630h1M346 623h1M421 640h1M341 626h1M77 637h1M214 581h1M278 634h1M291 646h1M288 627h1M552 633h1M308 634h1M266 633h1M141 636h1M182 629h1M139 626h1M507 632h1M546 635h1M258 631h1M68 635h1M111 638h1M264 622h1M234 631h1M178 628h1M150 626h1M154 591h1M67 630h1M435 628h1M70 634h1M442 633h1M217 633h1M468 640h1M214 636h1M92 625h1M209 620h1M95 634h1M292 632h1M197 640h1M235 641h1M135 626h1M431 630h1M146 629h1M247 626h1M118 619h1M525 635h1M73 628h1M199 638h1M77 623h1M296 629h1M217 624h1M171 634h1M94 630h1M270 634h1M141 638h1M179 637h1M241 632h1M454 632h1M417 628h1M81 624h1M155 633h1M79 628h1M157 630h1M305 636h1M320 637h1M93 621h1M470 628h1M203 631h1M190 637h1M433 630h1M177 637h1M186 616h1M238 629h1M246 630h1M149 565h1M240 621h1M506 634h1M241 631h1M81 629h1M82 620h1M102 630h1M128 629h1M232 629h1M509 637h1M222 631h1M449 625h1M377 639h1M383 625h1M494 625h1M358 632h1M197 629h1M182 603h1M123 628h1M73 646h1M92 633h1M74 629h1M253 635h1M116 629h1M133 629h1M116 630h1M112 630h1M369 640h1M142 637h1M241 630h1M218 610h1M358 637h1M234 630h1M287 650h1M56 625h1M314 640h1M107 627h1M412 637h1M277 632h1M104 639h1M53 638h1M81 616h1M316 621h1M491 635h1M402 635h1M451 623h1M377 627h1M107 630h1M160 637h1M213 635h1M176 637h1M211 636h1M379 639h1M313 633h1M247 650h1M357 629h1M266 628h1M155 637h1M187 632h1M323 637h1M477 633h1M377 623h1M101 624h1M114 624h1M385 637h1M107 627h1M192 622h1M228 630h1M341 629h1M194 576h1M308 636h1M352 632h1M166 632h1M284 623h1M351 638h1M264 629h1M241 621h1M225 625h1M230 617h1M384 619h1M121 626h1M137 631h1M461 629h1M212 626h1M440 633h1M245 632h1M542 646h1M259 627h1M435 629h1M250 636h1M79 597h1M535 640h1M287 629h1M184 624h1M359 596h1M213 622h1M112 637h1M143 628h1M66 639h1M102 627h1M194 629h1M302 633h1M545 628h1M400 627h1M441 636h1M233 637h1M71 629h1M437 626h1M157 627h1M77 620h1M189 627h1M305 633h1M189 623h1M76 640h1M410 632h1M359 633h1M440 620h1M353 610h1M53 625h1M155 643h1M368 638h1M175 634h1M436 634h1M224 639h1M124 631h1M456 637h1M174 643h1M112 636h1M275 631h1M421 620h1M160 638h1M412 639h1M468 640h1M80 625h1M120 617h1M133 634h1M289 628h1M255 624h1M292 645h1M278 621h1M234 632h1M68 631h1M358 625h1M151 633h1M241 623h1M435 640h1M333 634h1M461 637h1M281 639h1M287 626h1M392 633h1M232 637h1M109 641h1M133 634h1M353 623h1M221 621h1M65 629h1M315 636h1M105 567h1M202 630h1M143 643h1M248 638h1M353 636h1M67 636h1M269 632h1M83 640h1M112 623h1M380 641h1M74 630h1M512 627h1M221 636h1M209 632h1M66 626h1M188 631h1M198 601h1M339 637h1M132 624h1M211 631h1M178 640h1M66 631h1M283 623h1M408 641h1M426 625h1M184 639h1M127 635h1M109 620h1M126 630h1M543 640h1M406 632h1M303 634h1M147 597h1M143 640h1M145 628h1M105 626h1M319 640h1M60 630h1M423 635h1M342 638h1M134 600h1M257 628h1M160 630h1M311 632h1M320 635h1M149 635h1M192 635h1M153 629h1M127 612h1M274 638h1M155 618h1M453 631h1M491 626h1M133 637h1M187 625h1M184 628h1M107 632h1M216 627h1M85 629h1M198 618h1M243 628h1M60 631h1M192 628h1M223 628h1M140 581h1M430 634h1M143 635h1M266 639h1M177 641h1M272 629h1M194 631h1M420 644h1M445 625h1M159 637h1M521 630h1M298 637h1M53 629h1M222 635h1M241 623h1M510 630h1M172 629h1M305 641h1M503 638h1M221 639h1M180 632h1M134 619h1M164 626h1M74 630h1M88 637h1M343 637h1M108 633h1M140 631h1M355 632h1M315 629h1M167 638h1M248 624h1M311 638h1M96 623h1M293 633h1M254 634h1M512 628h1M274 627h1M464 642h1M93 587h1M323 636h1M94 639h1M219 634h1M159 635h1M187 629h1M340 627h1M240 638h1M103 614h1M139 640h1M94 639h1M102 633h1M147 622h1M142 629h1M75 631h1M115 634h1M549 638h1M195 628h1M189 618h1M270 630h1M469 640h1M383 633h1M113 598h1M93 621h1M159 640h1M56 629h1M234 633h1M353 625h1M378 639h1M533 623h1M310 631h1M445 626h1M186 631h1M287 628h1M174 638h1M441 638h1M328 627h1M329 632h1M89 625h1M173 639h1M191 633h1M237 636h1M163 644h1M90 619h1M128 638h1M311 629h1M481 642h1M116 635h1M276 633h1M280 617h1M401 626h1M226 641h1M303 640h1M291 630h1M259 636h1M230 555h1M206 622h1M105 625h1M543 630h1M538 642h1M410 621h1M133 632h1M283 638h1M228 624h1M75 631h1M361 629h1M237 634h1M280 624h1M243 629h1M357 633h1M343 641h1M105 627h1M87 581h1M408 636h1M186 635h1M267 648h1M124 640h1M418 636h1M201 582h1M161 640h1M148 631h1M97 629h1M213 615h1M264 642h1M120 629h1M176 624h1M193 624h1M372 629h1M210 637h1M310 631h1M252 636h1M400 630h1M209 626h1M259 639h1M75 631h1M490 640h1M305 633h1M98 638h1M139 627h1M396 642h1M240 628h1M178 631h1M319 626h1M483 616h1M275 629h1M161 637h1M261 650h1M188 630h1M283 635h1M211 633h1M286 625h1M180 630h1M188 635h1M283 635h1M328 637h1M345 618h1M214 533h1M476 639h1M237 634h1M91 630h1M95 638h1M97 623h1M346 633h1M195 629h1M244 639h1M397 628h1M512 631h1M192 642h1M195 600h1M370 622h1M314 629h1M90 632h1M506 635h1M196 628h1M142 623h1M221 630h1M426 627h1M440 631h1M155 632h1M200 638h1M176 631h1M384 630h1M234 630h1M87 634h1M161 634h1M220 576h1M506 559h1M499 643h1M258 630h1M255 640h1M224 633h1M84 627h1M145 622h1M191 638h1M298 614h1M165 631h1M371 632h1M339 629h1M271 640h1M60 629h1M334 642h1M196 633h1M530 643h1M204 637h1M182 630h1M163 634h1M77 623h1M241 619h1M93 639h1M455 632h1M195 634h1M415 631h1M63 626h1M460 639h1M303 633h1M329 627h1M254 628h1M173 635h1M231 623h1M176 628h1M218 629h1M133 640h1M323 633h1M375 635h1M316 628h1M519 629h1M209 634h1M88 641h1M394 628h1M242 626h1M105 633h1M86 622h1M128 618h1M94 630h1M253 640h1M178 629h1M317 639h1M144 619h1M59 632h1M139 623h1M219 632h1M228 637h1M108 637h1M240 627h1M236 641h1M142 623h1M467 635h1M208 629h1M322 626h1M172 630h1M484 619h1M77 629h1M88 644h1M159 644h1M74 633h1M249 633h1M300 634h1M79 625h1M116 628h1M120 637h1M196 638h1M244 636h1M246 628h1M309 638h1M520 644h1M466 624h1M221 630h1M265 626h1M82 633h1M91 632h1M494 615h1M302 635h1M252 633h1M76 632h1M519 630h1M172 541h1M143 635h1M233 630h1M133 627h1M113 630h1M349 640h1M134 632h1M140 639h1M116 628h1M321 638h1M352 642h1M137 623h1M195 629h1M446 637h1M186 627h1M169 623h1M183 625h1M216 628h1M57 631h1M449 629h1M123 645h1M170 629h1M101 636h1M99 631h1M423 639h1M181 627h1M146 636h1M172 628h1M158 623h1M238 638h1M338 635h1M129 629h1M159 638h1M108 629h1M248 637h1M211 618h1M393 638h1M522 612h1M339 636h1M112 633h1M125 593h1M356 630h1M115 585h1M67 622h1M268 625h1M162 634h1M424 627h1M211 636h1M448 644h1M422 625h1M228 632h1M319 636h1M253 624h1M86 631h1M172 620h1M229 633h1M53 631h1M274 640h1M83 624h1M511 635h1M205 629h1M379 629h1" stroke="#efe30e" stroke-width="1" fill="none" transform="translate(0,0.5)" shape-rendering="crispEdges"/>
<polyline points="53.4,224.2 55.4,230.3 58.4,217.4 60.6,217.0 63.6,250.1 66.3,220.8 70.4,218.5 73.8,220.1 77.2,218.4 80.6,218.4 84.7,221.5 87.4,220.8 89.5,207.9 91.5,212.0 94.6,233.3 96.9,216.7 99.3,216.5 102.4,220.8 110.5,203.8 112.9,216.1 115.3,217.4 118.4,220.8 123.5,207.9 126.2,213.3 131.4,243.3 134.4,205.6 139.1,218.1 144.3,212.0 147.3,222.9 149.3,223.5 152.7,231.0 155.4,230.1 157.5,232.8 160.2,218.1 161.8,220.8 168.1,204.8 170.7,223.5 173.4,214.7 176.1,220.8 178.6,215.6 181.6,216.1 184.0,212.0 186.7,213.3 189.5,212.7 191.5,216.7 194.2,218.1 196.7,221.1 199.7,217.4 202.4,219.5 205.1,227.6 207.6,241.9 210.5,212.7 212.6,212.7 215.3,220.1 218.0,220.8 220.7,224.2 223.5,219.5 225.7,205.2 229.1,217.4 233.8,212.0 235.6,224.9 238.2,228.3 244.7,213.3 246.8,219.5 249.5,222.2 251.5,220.5 254.3,226.3 259.7,217.4 262.4,210.6 265.4,209.3 267.9,217.8 269.9,212.7 271.9,212.7 276.0,220.1 278.7,217.8 283.8,226.9 286.9,212.0 288.3,229.7 291.4,222.9 293.4,231.4 295.7,231.7 299.1,231.0 301.9,225.6 303.9,232.4 306.4,234.1 308.3,220.8 310.0,214.7 312.8,212.7 314.4,205.6 317.2,207.9 320.6,235.8 323.0,219.5 326.0,211.0 327.7,214.0 330.9,207.9 333.8,208.3 338.6,208.3 340.6,228.3 343.1,226.9 346.5,212.0 348.8,229.7 354.3,211.0 361.5,230.1 365.4,213.3 367.6,207.9 369.6,212.7 372.9,231.0 380.5,212.0 382.6,218.1 385.5,218.4 388.3,219.5 391.0,212.7 393.0,211.0 395.7,212.7 400.0,210.2 402.7,210.6 406.1,207.6 409.3,216.5 411.6,210.6 415.0,209.3 419.7,213.3 424.5,211.3 427.5,208.6 432.7,216.7 435.6,224.9 437.4,220.8 440.4,227.6 444.9,209.9 446.9,210.6 450.6,208.3 454.4,208.6 457.8,212.0 461.2,213.3 463.9,209.9 466.7,211.6 469.4,210.6 473.5,209.7 477.8,206.3 479.6,209.3 483.0,209.3 485.0,211.0 487.3,206.5 492.5,231.4 495.9,226.9 498.0,227.3 500.7,211.0 502.7,215.4 505.9,230.6 508.8,228.7 516.3,205.6 519.7,224.2 521.5,224.2 523.8,212.7 526.5,208.6 532.7,214.3 537.4,207.6 542.2,211.6 544.2,211.3 547.6,206.5 550.3,212.0 553.7,212.7 558.5,218.4 563.3,207.6 568.4,212.4 571.4,212.4 574.1,211.3" fill="none" stroke="#14b4f2" stroke-width="1" stroke-linejoin="miter" shape-rendering="crispEdges"/>
<g font-family='"Liberation Sans", Arial, sans-serif' font-size="11" fill="#000" letter-spacing="-0.15"><text x="48.3" y="175" text-anchor="end">350</text><text x="579.2" y="175">0.35</text><text x="48.3" y="254" text-anchor="end">300</text><text x="579.2" y="254">0.30</text><text x="48.3" y="334" text-anchor="end">250</text><text x="579.2" y="334">0.25</text><text x="48.3" y="414" text-anchor="end">200</text><text x="579.2" y="414">0.20</text><text x="48.3" y="494" text-anchor="end">150</text><text x="579.2" y="494">0.15</text><text x="48.3" y="574" text-anchor="end">100</text><text x="579.2" y="574">0.10</text><text x="48.3" y="654" text-anchor="end">50</text><text x="579.2" y="654">0.05</text><text x="52.8" y="745" text-anchor="middle">0</text><text x="104.8" y="745" text-anchor="middle">12</text><text x="156.8" y="745" text-anchor="middle">24</text><text x="208.8" y="745" text-anchor="middle">36</text><text x="260.8" y="745" text-anchor="middle">48</text><text x="312.8" y="745" text-anchor="middle">60</text><text x="364.8" y="745" text-anchor="middle">72</text><text x="416.8" y="745" text-anchor="middle">84</text><text x="468.8" y="745" text-anchor="middle">96</text><text x="520.8" y="745" text-anchor="middle">108</text><text x="573.8" y="745" text-anchor="middle">120gB</text><text x="53" y="167.6">MB/s</text><text x="574" y="167.6" text-anchor="end">ms</text></g>
</svg>
<div style="position:absolute;left:617px;top:152px;width:71px;height:19px;border:1px solid #acacac;background:linear-gradient(#f2f2f2,#e4e4e4);"></div>
<div style="position:absolute;top:155px;font-size:12px;line-height:16px;height:16px;color:#000;white-space:nowrap;letter-spacing:-0.709px;left:552.45px;width:200px;text-align:center;">Start</div>
<div style="position:absolute;left:608px;top:183px;width:101px;height:1px;background:#a0a0a0;"></div>
<div style="position:absolute;left:608px;top:222px;width:101px;height:1px;background:#a0a0a0;"></div>
<div style="position:absolute;left:608px;top:294px;width:101px;height:1px;background:#a0a0a0;"></div>
<div style="position:absolute;left:608px;top:398px;width:101px;height:1px;background:#a0a0a0;"></div>
<svg style="position:absolute;left:613px;top:189px" width="13" height="13" viewBox="0 0 13 13"><circle cx="6.5" cy="6.5" r="6" fill="#fff" stroke="#555" stroke-width="1"/><circle cx="6.5" cy="6.5" r="3.3" fill="#1a1a1a"/></svg>
<div style="position:absolute;top:188px;font-size:12px;line-height:16px;height:16px;color:#000;white-space:nowrap;letter-spacing:-0.822px;left:629.3px;">Read</div>
<svg style="position:absolute;left:613px;top:205px" width="13" height="13" viewBox="0 0 13 13"><circle cx="6.5" cy="6.5" r="6" fill="#fff" stroke="#555" stroke-width="1"/></svg>
<div style="position:absolute;top:204px;font-size:12px;line-height:16px;height:16px;color:#000;white-space:nowrap;letter-spacing:-0.636px;left:629.3px;">Write</div>
<div style="position:absolute;left:613px;top:230px;width:11px;height:11px;background:#fff;border:1px solid #6c6c6c;"></div>
<div style="position:absolute;top:229px;font-size:12px;line-height:16px;height:16px;color:#000;white-space:nowrap;letter-spacing:-0.666px;left:629.3px;">Short stroke</div>
<div style="position:absolute;left:613px;top:250px;width:60px;height:18px;background:#fff;border:1px solid #d4d4d4;"></div>
<div style="position:absolute;left:657px;top:250px;width:17px;height:18px;background:#e9e9e9;border:1px solid #bcbcbc;border-left:none;"></div>
<div style="position:absolute;left:658px;top:251px;width:14px;height:7px;background:#f1f1f1;border:1px solid #dcdcdc;"></div>
<div style="position:absolute;left:658px;top:260px;width:14px;height:7px;background:#f1f1f1;border:1px solid #dcdcdc;"></div>
<svg style="position:absolute;left:661px;top:253px" width="9" height="15" viewBox="0 0 9 15"><path d="M1.8 4.2L4.4 1.3L7 4.2z M1.8 9.2L4.4 12.1L7 9.2z" fill="#5c5c5c"/></svg>
<div style="position:absolute;top:252px;font-size:12px;line-height:16px;height:16px;color:#8a8a8a;white-space:nowrap;letter-spacing:-0.524px;left:616px;">40</div>
<div style="position:absolute;top:252px;font-size:12px;line-height:16px;height:16px;color:#000;white-space:nowrap;letter-spacing:-0.439px;left:685.7px;">gB</div>
<div style="position:absolute;left:613px;top:279px;width:11px;height:11px;background:#fff;border:1px solid #6c6c6c;"></div><svg style="position:absolute;left:613px;top:279px" width="13" height="13" viewBox="0 0 13 13"><path d="M2.9 6.1L6 9L10.1 3" stroke="#000" stroke-width="2.1" fill="none"/></svg>
<div style="position:absolute;top:278px;font-size:12px;line-height:16px;height:16px;color:#000;white-space:nowrap;letter-spacing:-0.65px;left:629.3px;">Transfer rate</div>
<div style="position:absolute;top:296px;font-size:12px;line-height:16px;height:16px;color:#000;white-space:nowrap;letter-spacing:-1.167px;left:613px;">Minimum</div><div style="position:absolute;left:613px;top:312px;width:91px;height:14px;background:#000;border-left:1px solid #8a8a8a;border-top:1px solid #8a8a8a;"></div><div style="position:absolute;top:312px;font-size:12px;line-height:16px;height:16px;color:#1cb4f8;white-space:nowrap;font-weight:bold;letter-spacing:0.427px;left:559.21px;width:200px;text-align:center;">300.1 MB/s</div>
<div style="position:absolute;top:329px;font-size:12px;line-height:16px;height:16px;color:#000;white-space:nowrap;letter-spacing:-1.272px;left:613px;">Maximum</div><div style="position:absolute;left:613px;top:344px;width:91px;height:14px;background:#000;border-left:1px solid #8a8a8a;border-top:1px solid #8a8a8a;"></div><div style="position:absolute;top:344px;font-size:12px;line-height:16px;height:16px;color:#1cb4f8;white-space:nowrap;font-weight:bold;letter-spacing:0.427px;left:559.21px;width:200px;text-align:center;">329.5 MB/s</div>
<div style="position:absolute;top:359px;font-size:12px;line-height:16px;height:16px;color:#000;white-space:nowrap;letter-spacing:-0.669px;left:613px;">Average</div><div style="position:absolute;left:613px;top:375px;width:91px;height:14px;background:#000;border-left:1px solid #8a8a8a;border-top:1px solid #8a8a8a;"></div><div style="position:absolute;top:375px;font-size:12px;line-height:16px;height:16px;color:#1cb4f8;white-space:nowrap;font-weight:bold;letter-spacing:0.427px;left:559.21px;width:200px;text-align:center;">321.0 MB/s</div>
<div style="position:absolute;left:613px;top:404px;width:11px;height:11px;background:#fff;border:1px solid #6c6c6c;"></div><svg style="position:absolute;left:613px;top:404px" width="13" height="13" viewBox="0 0 13 13"><path d="M2.9 6.1L6 9L10.1 3" stroke="#000" stroke-width="2.1" fill="none"/></svg>
<div style="position:absolute;top:403px;font-size:12px;line-height:16px;height:16px;color:#000;white-space:nowrap;letter-spacing:-0.717px;left:629.3px;">Access time</div>
<div style="position:absolute;left:613px;top:419px;width:91px;height:14px;background:#000;border-left:1px solid #8a8a8a;border-top:1px solid #8a8a8a;"></div><div style="position:absolute;top:419px;font-size:12px;line-height:16px;height:16px;color:#ffff30;white-space:nowrap;font-weight:bold;letter-spacing:0.037px;left:559.02px;width:200px;text-align:center;">0.062 ms</div>
<div style="position:absolute;left:613px;top:438px;width:11px;height:11px;background:#fff;border:1px solid #6c6c6c;"></div><svg style="position:absolute;left:613px;top:438px" width="13" height="13" viewBox="0 0 13 13"><path d="M2.9 6.1L6 9L10.1 3" stroke="#000" stroke-width="2.1" fill="none"/></svg>
<div style="position:absolute;top:437px;font-size:12px;line-height:16px;height:16px;color:#000;white-space:nowrap;letter-spacing:-0.742px;left:629.3px;">Burst rate</div>
<div style="position:absolute;left:613px;top:453px;width:91px;height:14px;background:#000;border-left:1px solid #8a8a8a;border-top:1px solid #8a8a8a;"></div><div style="position:absolute;top:453px;font-size:12px;line-height:16px;height:16px;color:#fff;white-space:nowrap;font-weight:bold;letter-spacing:0.427px;left:559.21px;width:200px;text-align:center;">159.3 MB/s</div>
<div style="position:absolute;top:470px;font-size:12px;line-height:16px;height:16px;color:#000;white-space:nowrap;letter-spacing:-0.774px;left:613px;">CPU usage</div><div style="position:absolute;left:613px;top:486px;width:91px;height:14px;background:#000;border-left:1px solid #8a8a8a;border-top:1px solid #8a8a8a;"></div><div style="position:absolute;top:486px;font-size:12px;line-height:16px;height:16px;color:#fff;white-space:nowrap;font-weight:bold;letter-spacing:-0.045px;left:558.98px;width:200px;text-align:center;">42.7%</div>
</div>
</body></html>
